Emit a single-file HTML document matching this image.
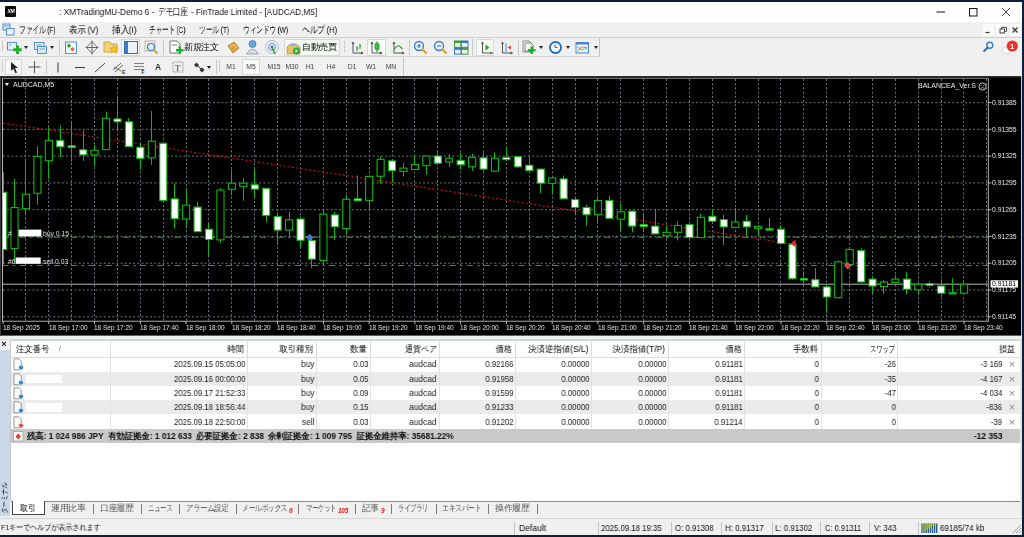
<!DOCTYPE html><html><head><meta charset="utf-8"><style>
html,body{margin:0;padding:0;width:1024px;height:537px;overflow:hidden;background:#f0f0f0}
.r{position:absolute}
.t{position:absolute;white-space:nowrap;font-family:"Liberation Sans", sans-serif;will-change:transform}
.j{display:inline-block;width:1em;text-align:center}
</style></head><body><div class="r" style="left:0px;top:0px;width:1024px;height:537px;background:#f0f0f0;"></div>
<div class="r" style="left:0px;top:0px;width:1024px;height:1.6px;background:#0e2038;"></div>
<div class="r" style="left:0px;top:1.6px;width:1022.4px;height:20.9px;background:#ffffff;"></div>
<div class="r" style="left:5px;top:6px;width:11px;height:11px;background:#0a0a0a;border-radius:1px"></div>
<div class="t" style="left:-89.50px;width:200px;text-align:center;top:8.20px;font-size:5px;line-height:6.00px;color:#fff;font-weight:bold;font-style:italic;letter-spacing:-0.3px">XM</div>
<div class="t" id="fit0" style="left:59.1px;top:6.30px;font-size:9.5px;line-height:11.40px;color:#111;font-weight:normal;;transform-origin:left center;transform:scaleX(0.8800)">: XMTradingMU-Demo 6 -</div>
<div class="t" id="fit1" style="left:157.8px;top:6.30px;font-size:9.5px;line-height:11.40px;color:#111;font-weight:normal;;transform-origin:left center;transform:scaleX(0.7711)"><span class="j">デ</span><span class="j">モ</span><span class="j">口</span><span class="j">座</span></div>
<div class="t" id="fit2" style="left:190.5px;top:6.30px;font-size:9.5px;line-height:11.40px;color:#111;font-weight:normal;;transform-origin:left center;transform:scaleX(0.8613)">- FinTrade Limited - [AUDCAD,M5]</div>
<svg class="r" style="left:930px;top:4px" width="92" height="16" viewBox="0 0 92 16"><line x1="6.5" y1="8" x2="15" y2="8" stroke="#111" stroke-width="1"/><rect x="39.5" y="4.5" width="7.5" height="7.5" fill="none" stroke="#111" stroke-width="1"/><line x1="72" y1="4" x2="80" y2="12" stroke="#333" stroke-width="0.9"/><line x1="80" y1="4" x2="72" y2="12" stroke="#333" stroke-width="0.9"/></svg>
<div class="r" style="left:0px;top:22.5px;width:1022px;height:14.5px;background:#f0f0f0;"></div>
<div class="r" style="left:0px;top:37px;width:1022px;height:1px;background:#cfcfcf;"></div>
<svg class="r" style="left:2px;top:23px" width="13" height="13" viewBox="0 0 13 13"><rect x="1" y="1" width="7" height="6" fill="#dbe8f5" stroke="#4a86c8" stroke-width="0.9"/><rect x="4.5" y="5.5" width="7.5" height="6.5" fill="#e8f1fa" stroke="#4a86c8" stroke-width="0.9"/><line x1="2" y1="3" x2="7" y2="3" stroke="#4a86c8" stroke-width="0.8"/></svg>
<div class="t" id="fit3" style="left:19.3px;top:24.10px;font-size:9.5px;line-height:11.40px;color:#000;font-weight:normal;;transform-origin:left center;transform:scaleX(0.6934)"><span class="j">フ</span><span class="j">ァ</span><span class="j">イ</span><span class="j">ル</span> (F)</div>
<div class="t" id="fit4" style="left:68.6px;top:24.10px;font-size:9.5px;line-height:11.40px;color:#000;font-weight:normal;;transform-origin:left center;transform:scaleX(0.8539)"><span class="j">表</span><span class="j">示</span> (V)</div>
<div class="t" id="fit5" style="left:111.5px;top:24.10px;font-size:9.5px;line-height:11.40px;color:#000;font-weight:normal;;transform-origin:left center;transform:scaleX(0.8796)"><span class="j">挿</span><span class="j">入</span>(I)</div>
<div class="t" id="fit6" style="left:149px;top:24.10px;font-size:9.5px;line-height:11.40px;color:#000;font-weight:normal;;transform-origin:left center;transform:scaleX(0.6762)"><span class="j">チ</span><span class="j">ャ</span><span class="j">ー</span><span class="j">ト</span> (C)</div>
<div class="t" id="fit7" style="left:199px;top:24.10px;font-size:9.5px;line-height:11.40px;color:#000;font-weight:normal;;transform-origin:left center;transform:scaleX(0.6955)"><span class="j">ツ</span><span class="j">ー</span><span class="j">ル</span> (T)</div>
<div class="t" id="fit8" style="left:242.8px;top:24.10px;font-size:9.5px;line-height:11.40px;color:#000;font-weight:normal;;transform-origin:left center;transform:scaleX(0.6892)"><span class="j">ウ</span><span class="j">ィ</span><span class="j">ン</span><span class="j">ド</span><span class="j">ウ</span> (W)</div>
<div class="t" id="fit9" style="left:301.6px;top:24.10px;font-size:9.5px;line-height:11.40px;color:#000;font-weight:normal;;transform-origin:left center;transform:scaleX(0.7896)"><span class="j">ヘ</span><span class="j">ル</span><span class="j">プ</span> (H)</div>
<div class="r" style="left:982.7px;top:24px;width:11.3px;height:12px;background:#fbfbfb;"></div>
<div class="r" style="left:996.2px;top:24px;width:11.3px;height:12px;background:#fbfbfb;"></div>
<div class="r" style="left:1009.7px;top:24px;width:11.3px;height:12px;background:#fbfbfb;"></div>
<svg class="r" style="left:982px;top:24px" width="40" height="12" viewBox="0 0 40 12"><line x1="3.5" y1="8.5" x2="7.5" y2="8.5" stroke="#333" stroke-width="1.2"/><rect x="18" y="5" width="4.5" height="4" fill="none" stroke="#333" stroke-width="0.9"/><path d="M19.5 5 V3.3 H24.5 V7.3 H22.5" fill="none" stroke="#333" stroke-width="0.9"/><path d="M30.5 3.5 L35.5 8.5 M35.5 3.5 L30.5 8.5" stroke="#333" stroke-width="1.3"/></svg>
<div class="r" style="left:0px;top:38px;width:1022px;height:19px;background:#f0f0f0;"></div>
<div class="r" style="left:0px;top:56.3px;width:599.6px;height:1px;background:#d4d4d4;"></div>
<div class="r" style="left:0px;top:58px;width:1022px;height:18px;background:#f0f0f0;"></div>
<div class="r" style="left:0px;top:75.7px;width:1022px;height:2px;background:#2e2e2e;"></div>
<div class="r" style="left:2px;top:41px;width:1px;height:1px;background:#a8a8a8;"></div>
<div class="r" style="left:2px;top:43px;width:1px;height:1px;background:#a8a8a8;"></div>
<div class="r" style="left:2px;top:45px;width:1px;height:1px;background:#a8a8a8;"></div>
<div class="r" style="left:2px;top:47px;width:1px;height:1px;background:#a8a8a8;"></div>
<div class="r" style="left:2px;top:49px;width:1px;height:1px;background:#a8a8a8;"></div>
<div class="r" style="left:2px;top:51px;width:1px;height:1px;background:#a8a8a8;"></div>
<div class="r" style="left:2px;top:60px;width:1px;height:1px;background:#a8a8a8;"></div>
<div class="r" style="left:2px;top:62px;width:1px;height:1px;background:#a8a8a8;"></div>
<div class="r" style="left:2px;top:64px;width:1px;height:1px;background:#a8a8a8;"></div>
<div class="r" style="left:2px;top:66px;width:1px;height:1px;background:#a8a8a8;"></div>
<div class="r" style="left:2px;top:68px;width:1px;height:1px;background:#a8a8a8;"></div>
<div class="r" style="left:2px;top:70px;width:1px;height:1px;background:#a8a8a8;"></div>
<div class="r" style="left:599.3px;top:38px;width:1px;height:18.5px;background:#c4c4c4;"></div>
<div class="r" style="left:402.5px;top:58px;width:1px;height:18px;background:#c4c4c4;"></div>
<div class="r" style="left:59px;top:40px;width:1px;height:15px;background:#c8c8c8;"></div>
<div class="r" style="left:163px;top:40px;width:1px;height:15px;background:#c8c8c8;"></div>
<div class="r" style="left:409px;top:40px;width:1px;height:15px;background:#c8c8c8;"></div>
<div class="r" style="left:518px;top:40px;width:1px;height:15px;background:#c8c8c8;"></div>
<div class="r" style="left:46px;top:60px;width:1px;height:14px;background:#c8c8c8;"></div>
<div class="r" style="left:216px;top:60px;width:1px;height:14px;background:#c8c8c8;"></div>
<div class="r" style="left:343.5px;top:41px;width:1px;height:1px;background:#a8a8a8;"></div>
<div class="r" style="left:343.5px;top:43px;width:1px;height:1px;background:#a8a8a8;"></div>
<div class="r" style="left:343.5px;top:45px;width:1px;height:1px;background:#a8a8a8;"></div>
<div class="r" style="left:343.5px;top:47px;width:1px;height:1px;background:#a8a8a8;"></div>
<div class="r" style="left:343.5px;top:49px;width:1px;height:1px;background:#a8a8a8;"></div>
<div class="r" style="left:343.5px;top:51px;width:1px;height:1px;background:#a8a8a8;"></div>
<div class="r" style="left:472.3px;top:39px;width:1.2px;height:17px;background:#c8c8c8;"></div>
<div class="r" style="left:219px;top:60px;width:1px;height:1px;background:#a8a8a8;"></div>
<div class="r" style="left:219px;top:62px;width:1px;height:1px;background:#a8a8a8;"></div>
<div class="r" style="left:219px;top:64px;width:1px;height:1px;background:#a8a8a8;"></div>
<div class="r" style="left:219px;top:66px;width:1px;height:1px;background:#a8a8a8;"></div>
<div class="r" style="left:219px;top:68px;width:1px;height:1px;background:#a8a8a8;"></div>
<div class="r" style="left:219px;top:70px;width:1px;height:1px;background:#a8a8a8;"></div>
<div class="r" style="left:121px;top:39px;width:19px;height:17px;background:#f7fbf5;border:1px solid #d8d8d8;box-sizing:border-box"></div>
<div class="r" style="left:284px;top:39px;width:56px;height:17px;background:#f7fbf5;border:1px solid #d8d8d8;box-sizing:border-box"></div>
<div class="r" style="left:367px;top:39px;width:19px;height:17px;background:#f7fbf5;border:1px solid #d8d8d8;box-sizing:border-box"></div>
<div class="r" style="left:476px;top:39px;width:18px;height:17px;background:#f7fbf5;border:1px solid #d8d8d8;box-sizing:border-box"></div>
<div class="r" style="left:5px;top:59px;width:17px;height:16px;background:#f7fbf5;border:1px solid #d8d8d8;box-sizing:border-box"></div>
<div class="r" style="left:242px;top:59px;width:18px;height:16px;background:#f7fbf5;border:1px solid #d8d8d8;box-sizing:border-box"></div>
<svg class="r" style="left:6px;top:40px" width="16" height="15" viewBox="0 0 16 15"><rect x="1.5" y="2.5" width="9" height="7.5" fill="#e6f0fa" stroke="#4a86c8" stroke-width="0.9"/><line x1="3" y1="5" x2="5" y2="5" stroke="#4a86c8" stroke-width="0.8"/><path d="M7.3 8.3 h2.7 v-2.7 h3 v2.7 h2.7 v3 h-2.7 v2.7 h-3 v-2.7 h-2.7z" fill="#22b422"/></svg>
<div class="r" style="left:24px;top:46px;width:0;height:0;border-left:2.5px solid transparent;border-right:2.5px solid transparent;border-top:3px solid #222"></div>
<svg class="r" style="left:33px;top:40px" width="15" height="15" viewBox="0 0 15 15"><rect x="1.5" y="2.5" width="9.5" height="7" fill="#e6f0fa" stroke="#4a86c8" stroke-width="0.9"/><rect x="4.5" y="6.5" width="9" height="7" fill="#dceaf8" stroke="#4a86c8" stroke-width="0.9"/><line x1="3" y1="5" x2="9" y2="5" stroke="#4a86c8" stroke-width="0.7"/><line x1="6" y1="9" x2="12" y2="9" stroke="#4a86c8" stroke-width="0.7"/></svg>
<div class="r" style="left:50px;top:46px;width:0;height:0;border-left:2.5px solid transparent;border-right:2.5px solid transparent;border-top:3px solid #222"></div>
<svg class="r" style="left:64px;top:40px" width="14" height="15" viewBox="0 0 14 15"><rect x="1.5" y="2" width="11" height="11.5" fill="#f4f8fc" stroke="#5b93d2" stroke-width="1"/><path d="M5 3.5 l2.2 2.2 l-2.2 2.2 l-2.2-2.2z" fill="#2aa52a"/><path d="M8.5 7 l2.2 2.2 l-2.2 2.2 l-2.2-2.2z" fill="#e0603a"/></svg>
<svg class="r" style="left:85px;top:40px" width="14" height="15" viewBox="0 0 14 15"><path d="M7 1.5 L12.5 7.5 L7 13.5 L1.5 7.5z" fill="none" stroke="#666" stroke-width="0.9"/><path d="M7 0.5 v14 M0.5 7.5 h13" stroke="#555" stroke-width="0.9"/></svg>
<svg class="r" style="left:103px;top:39px" width="17" height="16" viewBox="0 0 17 16"><path d="M1 3 h6 l1 2 h6 v8 h-13z" fill="#f2d37a" stroke="#c9a440"/><path d="M11 6 l1.3 2.7 3 .4-2.2 2 .6 3-2.7-1.5-2.7 1.5.6-3-2.2-2 3-.4z" fill="#f5c518" stroke="#c9a030" stroke-width="0.6"/></svg>
<svg class="r" style="left:124px;top:41px" width="14" height="13" viewBox="0 0 14 13"><rect x="0.5" y="0.5" width="13" height="12" fill="#eaf3fb" stroke="#2e6db4"/><rect x="1" y="1" width="3" height="11" fill="#3d7fc7"/></svg>
<svg class="r" style="left:144px;top:40px" width="15" height="15" viewBox="0 0 15 15"><rect x="1" y="1" width="10" height="10" fill="#f4efe0" stroke="#aaa" stroke-width="0.8"/><circle cx="7" cy="7" r="3.5" fill="#dfeefc" stroke="#3b78c0" stroke-width="1.2"/><path d="M9.5 9.5 l4 4" stroke="#d8a030" stroke-width="2"/></svg>
<svg class="r" style="left:168px;top:40px" width="16" height="16" viewBox="0 0 16 16"><path d="M2 1 h7 l3 3 v9 h-10z" fill="#fff" stroke="#666" stroke-width="0.9"/><line x1="4" y1="5" x2="9" y2="5" stroke="#888"/><path d="M8 9 h2.5 v-2.5 h2.5 v2.5 h2.5 v2.5 h-2.5 v2.5 h-2.5 v-2.5 h-2.5z" fill="#1fae2f"/></svg>
<div class="t" id="fit10" style="left:184px;top:42.40px;font-size:8.5px;line-height:10.20px;color:#000;font-weight:normal;;transform-origin:left center;transform:scaleX(1.0000)"><span class="j">新</span><span class="j">規</span><span class="j">注</span><span class="j">文</span></div>
<svg class="r" style="left:225px;top:40px" width="15" height="15" viewBox="0 0 15 15"><path d="M3 6 l6 -4 l5 6 l-6 5z" fill="#d9a63a" stroke="#a87820" stroke-width="0.8"/><path d="M5 7 l4 -2.5 l3 3.5" fill="none" stroke="#f5d98a"/></svg>
<svg class="r" style="left:245px;top:39px" width="15" height="16" viewBox="0 0 15 16"><circle cx="7.5" cy="5" r="3.5" fill="#6aa6e0" stroke="#3a76b8" stroke-width="0.8"/><path d="M1.5 15 q6 -10 12 0z" fill="#d8dde6" stroke="#8a96a8" stroke-width="0.8"/></svg>
<svg class="r" style="left:264px;top:39px" width="16" height="16" viewBox="0 0 16 16"><circle cx="8" cy="8" r="6.5" fill="#e4ecf6" stroke="#a8b8cc" stroke-width="0.8"/><circle cx="8" cy="8" r="3.5" fill="none" stroke="#6a8ab0" stroke-width="0.9"/><circle cx="8" cy="8" r="1.5" fill="#3a6aa0"/><path d="M8 8 l3 7" stroke="#2fa52f" stroke-width="1.6"/></svg>
<svg class="r" style="left:286px;top:40px" width="15" height="15" viewBox="0 0 15 15"><path d="M1 7 q6-7 13 0 v7 h-13z" fill="#e6c36a" stroke="#b8902a" stroke-width="0.7"/><path d="M2 6 q5-5 11 0" fill="#8ab8e6"/><circle cx="10.5" cy="11" r="3.6" fill="#2bae3b"/><path d="M9.5 9.2 l2.6 1.8 l-2.6 1.8z" fill="#fff"/></svg>
<div class="t" id="fit11" style="left:301.5px;top:42.40px;font-size:8.5px;line-height:10.20px;color:#000;font-weight:normal;;transform-origin:left center;transform:scaleX(0.9912)"><span class="j">自</span><span class="j">動</span><span class="j">売</span><span class="j">買</span></div>
<svg class="r" style="left:350px;top:40px" width="14" height="15" viewBox="0 0 14 15"><path d="M3 2 v11 h10" fill="none" stroke="#555" stroke-width="1"/><path d="M1.5 4 l1.5-2.5 l1.5 2.5z M11 11.5 l2.5 1.5 l-2.5 1.5z" fill="#555"/><path d="M7 6 v5 M10 4 v5 M7 8 h1.2 M10 6 h1.2" stroke="#2a9a2a" stroke-width="1.1"/></svg>
<svg class="r" style="left:369px;top:40px" width="15" height="15" viewBox="0 0 15 15"><path d="M3 2 v11 h10" fill="none" stroke="#555" stroke-width="1"/><path d="M1.5 4 l1.5-2.5 l1.5 2.5z M11 11.5 l2.5 1.5 l-2.5 1.5z" fill="#555"/><rect x="6" y="3" width="4" height="7" rx="2" fill="#3bbf3b" stroke="#1f8f1f" stroke-width="0.8"/><path d="M8 1.5 v1.5 M8 10 v2" stroke="#1f8f1f"/></svg>
<svg class="r" style="left:391px;top:40px" width="14" height="15" viewBox="0 0 14 15"><path d="M3 2 v11 h10" fill="none" stroke="#555" stroke-width="1"/><path d="M1.5 4 l1.5-2.5 l1.5 2.5z M11 11.5 l2.5 1.5 l-2.5 1.5z" fill="#555"/><path d="M3.5 9 q2.5-4 5-3 l3 3" fill="none" stroke="#2a9a2a" stroke-width="1.1"/></svg>
<svg class="r" style="left:413px;top:40px" width="15" height="15" viewBox="0 0 15 15"><circle cx="6" cy="6" r="4.5" fill="#e6f1fc" stroke="#3a7cc4" stroke-width="1.3"/><path d="M4 6 h4 M6 4 v4" stroke="#3a7cc4" stroke-width="1.2"/><path d="M9 9 l4.5 4.5" stroke="#d8a030" stroke-width="2.2"/></svg>
<svg class="r" style="left:433px;top:40px" width="15" height="15" viewBox="0 0 15 15"><circle cx="6" cy="6" r="4.5" fill="#e6f1fc" stroke="#3a7cc4" stroke-width="1.3"/><path d="M4 6 h4" stroke="#3a7cc4" stroke-width="1.2"/><path d="M9 9 l4.5 4.5" stroke="#d8a030" stroke-width="2.2"/></svg>
<svg class="r" style="left:454px;top:40px" width="15" height="15" viewBox="0 0 15 15"><rect x="0.5" y="1" width="6.5" height="6.3" fill="#eef6ee" stroke="#3a9a3a"/><rect x="0.5" y="1" width="6.5" height="2" fill="#3a9a3a"/><rect x="7.5" y="1" width="6.5" height="6.3" fill="#eef3fb" stroke="#3a78c8"/><rect x="7.5" y="1" width="6.5" height="2" fill="#3a78c8"/><rect x="0.5" y="7.8" width="6.5" height="6.3" fill="#eef3fb" stroke="#3a78c8"/><rect x="0.5" y="7.8" width="6.5" height="2" fill="#3a78c8"/><rect x="7.5" y="7.8" width="6.5" height="6.3" fill="#eef6ee" stroke="#3a9a3a"/><rect x="7.5" y="7.8" width="6.5" height="2" fill="#3a9a3a"/></svg>
<svg class="r" style="left:479px;top:40px" width="15" height="15" viewBox="0 0 15 15"><path d="M3.5 2 v11 h10" fill="none" stroke="#555" stroke-width="1"/><path d="M2 4 l1.5-2.5 l1.5 2.5z M11.5 11.5 l2.5 1.5 l-2.5 1.5z" fill="#555"/><path d="M6.5 4.5 l4 3 l-4 3z" fill="#2aa52a"/></svg>
<svg class="r" style="left:499px;top:40px" width="15" height="15" viewBox="0 0 15 15"><path d="M3.5 2 v11 h10" fill="none" stroke="#555" stroke-width="1"/><path d="M2 4 l1.5-2.5 l1.5 2.5z M11.5 11.5 l2.5 1.5 l-2.5 1.5z" fill="#555"/><path d="M7 3 v9" stroke="#4a8ad0" stroke-width="1"/><path d="M12 5.5 l-3.5 2 l3.5 2z" fill="#d84a2a"/></svg>
<svg class="r" style="left:521px;top:40px" width="16" height="16" viewBox="0 0 16 16"><path d="M2 1 h6 l2 2 v9 h-8z" fill="#fff" stroke="#666" stroke-width="0.8"/><path d="M4 3 h6 l2 2 v6 h-8z" fill="#f6f6f6" stroke="#666" stroke-width="0.8"/><path d="M7 9 h2.5 v-2.5 h2.5 v2.5 h2.5 v2.5 h-2.5 v2.5 h-2.5 v-2.5 h-2.5z" fill="#1fae2f"/></svg>
<div class="r" style="left:539px;top:46px;width:0;height:0;border-left:2.5px solid transparent;border-right:2.5px solid transparent;border-top:3px solid #222"></div>
<svg class="r" style="left:548px;top:40px" width="16" height="16" viewBox="0 0 16 16"><circle cx="7.5" cy="7.5" r="6.5" fill="#1f6fc0"/><circle cx="7.5" cy="7.5" r="4.6" fill="#f4f8fc"/><path d="M7 4.5 v3 h2.5" stroke="#444" stroke-width="0.8" fill="none"/></svg>
<div class="r" style="left:566px;top:46px;width:0;height:0;border-left:2.5px solid transparent;border-right:2.5px solid transparent;border-top:3px solid #222"></div>
<svg class="r" style="left:575px;top:41px" width="15" height="14" viewBox="0 0 15 14"><rect x="1" y="1.5" width="12.5" height="10.5" fill="#eef4fb" stroke="#4a86c8"/><rect x="1" y="1.5" width="12.5" height="2" fill="#4a86c8"/><path d="M2.5 10 l2.5-2 l2.5 1 l2.5-2.5 l2.5 2" stroke="#2aa52a" fill="none" stroke-width="0.8"/><path d="M2.5 6.5 l2.5 .8 l2.5-1.5 l2.5 .8 l2.5-.8" stroke="#d84a2a" fill="none" stroke-width="0.7"/></svg>
<div class="r" style="left:594px;top:46px;width:0;height:0;border-left:2.5px solid transparent;border-right:2.5px solid transparent;border-top:3px solid #222"></div>
<svg class="r" style="left:980px;top:39px" width="16" height="16" viewBox="0 0 16 16"><circle cx="9.8" cy="6.3" r="3" fill="#f4f8fc" stroke="#3a7cc4" stroke-width="1.4"/><path d="M7.7 8.5 l-3.6 3.6" stroke="#2a6cb4" stroke-width="2" stroke-linecap="round"/></svg>
<svg class="r" style="left:1000px;top:38px" width="22" height="18" viewBox="0 0 22 18"><ellipse cx="6.5" cy="12.5" rx="4.5" ry="3.2" fill="#f8f8f8" stroke="#c8c8c8" stroke-width="0.7"/><circle cx="12.3" cy="8" r="5.6" fill="#e5332a"/></svg>
<div class="t" style="left:912.40px;width:200px;text-align:center;top:41.80px;font-size:7.5px;line-height:9.00px;color:#fff;font-weight:bold;">1</div>
<svg class="r" style="left:8px;top:60px" width="12" height="14" viewBox="0 0 12 14"><path d="M3 2 l7 6 h-3 l2 4.5 l-1.6 .8 l-2-4.5 l-2.4 2.2z" fill="#222"/></svg>
<svg class="r" style="left:28px;top:60px" width="13" height="14" viewBox="0 0 13 14"><path d="M6.5 1 v12 M0.5 7 h12" stroke="#555" stroke-width="1"/></svg>
<svg class="r" style="left:55px;top:60px" width="6" height="14" viewBox="0 0 6 14"><path d="M3 2.5 v10" stroke="#444" stroke-width="1.1"/></svg>
<svg class="r" style="left:73px;top:60px" width="14" height="14" viewBox="0 0 14 14"><path d="M2 7.5 h10" stroke="#444" stroke-width="1.1"/></svg>
<svg class="r" style="left:93px;top:60px" width="14" height="14" viewBox="0 0 14 14"><path d="M2 12 l10 -9" stroke="#444" stroke-width="1"/></svg>
<svg class="r" style="left:112px;top:60px" width="15" height="14" viewBox="0 0 15 14"><path d="M1 10 l8-7 M3 12 l8-7 M2 7 l7 4" stroke="#555" stroke-width="0.9"/><text x="10" y="13.5" font-size="5" font-weight="bold" font-family="Liberation Sans" fill="#333">E</text></svg>
<svg class="r" style="left:132px;top:60px" width="15" height="14" viewBox="0 0 15 14"><path d="M2 3.5 h10 M2 6.5 h10 M2 9.5 h10" stroke="#666" stroke-width="0.8"/><text x="9.5" y="13.5" font-size="5" font-weight="bold" font-family="Liberation Sans" fill="#333">F</text></svg>
<div class="t" style="left:58.00px;width:200px;text-align:center;top:61.90px;font-size:8.5px;line-height:10.20px;color:#333;font-weight:bold;">A</div>
<svg class="r" style="left:172px;top:60px" width="12" height="14" viewBox="0 0 12 14"><rect x="1" y="2" width="10" height="10" fill="none" stroke="#777" stroke-width="0.8" stroke-dasharray="1.5 1"/><text x="3" y="11" font-size="9" font-family="Liberation Serif" fill="#333">T</text></svg>
<svg class="r" style="left:193px;top:60px" width="13" height="14" viewBox="0 0 13 14"><path d="M3.5 2.5 l2.5 2.5 l-2.5 2.5 l-2.5-2.5z" fill="#333"/><path d="M9 7.5 l2.5 2.5 l-2.5 2.5 l-2.5-2.5z" fill="#333"/><path d="M5 6 l3 3" stroke="#333" stroke-width="1"/></svg>
<div class="r" style="left:207px;top:66px;width:0;height:0;border-left:2.5px solid transparent;border-right:2.5px solid transparent;border-top:3px solid #222"></div>
<div class="t" style="left:130.50px;width:200px;text-align:center;top:63.22px;font-size:6.8px;line-height:8.16px;color:#444;font-weight:normal;">M1</div>
<div class="t" style="left:151.00px;width:200px;text-align:center;top:63.22px;font-size:6.8px;line-height:8.16px;color:#444;font-weight:normal;">M5</div>
<div class="t" style="left:173.50px;width:200px;text-align:center;top:63.22px;font-size:6.8px;line-height:8.16px;color:#444;font-weight:normal;">M15</div>
<div class="t" style="left:191.50px;width:200px;text-align:center;top:63.22px;font-size:6.8px;line-height:8.16px;color:#444;font-weight:normal;">M30</div>
<div class="t" style="left:210.00px;width:200px;text-align:center;top:63.22px;font-size:6.8px;line-height:8.16px;color:#444;font-weight:normal;">H1</div>
<div class="t" style="left:230.50px;width:200px;text-align:center;top:63.22px;font-size:6.8px;line-height:8.16px;color:#444;font-weight:normal;">H4</div>
<div class="t" style="left:252.00px;width:200px;text-align:center;top:63.22px;font-size:6.8px;line-height:8.16px;color:#444;font-weight:normal;">D1</div>
<div class="t" style="left:271.00px;width:200px;text-align:center;top:63.22px;font-size:6.8px;line-height:8.16px;color:#444;font-weight:normal;">W1</div>
<div class="t" style="left:291.00px;width:200px;text-align:center;top:63.22px;font-size:6.8px;line-height:8.16px;color:#444;font-weight:normal;">MN</div>
<svg class="r" style="left:0px;top:0px" width="1024" height="537" viewBox="0 0 1024 537">
<rect x="0" y="77.5" width="1021" height="258.1" fill="#000"/><line x1="3" y1="102.60" x2="988.3" y2="102.60" stroke="#6c7680" stroke-width="1" stroke-dasharray="2 2.2"/><line x1="3" y1="129.37" x2="988.3" y2="129.37" stroke="#6c7680" stroke-width="1" stroke-dasharray="2 2.2"/><line x1="3" y1="156.14" x2="988.3" y2="156.14" stroke="#6c7680" stroke-width="1" stroke-dasharray="2 2.2"/><line x1="3" y1="182.91" x2="988.3" y2="182.91" stroke="#6c7680" stroke-width="1" stroke-dasharray="2 2.2"/><line x1="3" y1="209.68" x2="988.3" y2="209.68" stroke="#6c7680" stroke-width="1" stroke-dasharray="2 2.2"/><line x1="3" y1="236.45" x2="988.3" y2="236.45" stroke="#6c7680" stroke-width="1" stroke-dasharray="2 2.2"/><line x1="3" y1="263.22" x2="988.3" y2="263.22" stroke="#6c7680" stroke-width="1" stroke-dasharray="2 2.2"/><line x1="3" y1="289.99" x2="988.3" y2="289.99" stroke="#6c7680" stroke-width="1" stroke-dasharray="2 2.2"/><line x1="3" y1="316.76" x2="988.3" y2="316.76" stroke="#6c7680" stroke-width="1" stroke-dasharray="2 2.2"/><line x1="25.50" y1="79" x2="25.50" y2="321.2" stroke="#6c7680" stroke-width="1" stroke-dasharray="2 2.2"/><line x1="48.50" y1="79" x2="48.50" y2="321.2" stroke="#6c7680" stroke-width="1" stroke-dasharray="2 2.2"/><line x1="71.50" y1="79" x2="71.50" y2="321.2" stroke="#6c7680" stroke-width="1" stroke-dasharray="2 2.2"/><line x1="94.50" y1="79" x2="94.50" y2="321.2" stroke="#6c7680" stroke-width="1" stroke-dasharray="2 2.2"/><line x1="117.50" y1="79" x2="117.50" y2="321.2" stroke="#6c7680" stroke-width="1" stroke-dasharray="2 2.2"/><line x1="140.50" y1="79" x2="140.50" y2="321.2" stroke="#6c7680" stroke-width="1" stroke-dasharray="2 2.2"/><line x1="163.50" y1="79" x2="163.50" y2="321.2" stroke="#6c7680" stroke-width="1" stroke-dasharray="2 2.2"/><line x1="186.50" y1="79" x2="186.50" y2="321.2" stroke="#6c7680" stroke-width="1" stroke-dasharray="2 2.2"/><line x1="208.50" y1="79" x2="208.50" y2="321.2" stroke="#6c7680" stroke-width="1" stroke-dasharray="2 2.2"/><line x1="231.50" y1="79" x2="231.50" y2="321.2" stroke="#6c7680" stroke-width="1" stroke-dasharray="2 2.2"/><line x1="254.50" y1="79" x2="254.50" y2="321.2" stroke="#6c7680" stroke-width="1" stroke-dasharray="2 2.2"/><line x1="277.50" y1="79" x2="277.50" y2="321.2" stroke="#6c7680" stroke-width="1" stroke-dasharray="2 2.2"/><line x1="300.50" y1="79" x2="300.50" y2="321.2" stroke="#6c7680" stroke-width="1" stroke-dasharray="2 2.2"/><line x1="323.50" y1="79" x2="323.50" y2="321.2" stroke="#6c7680" stroke-width="1" stroke-dasharray="2 2.2"/><line x1="346.50" y1="79" x2="346.50" y2="321.2" stroke="#6c7680" stroke-width="1" stroke-dasharray="2 2.2"/><line x1="369.50" y1="79" x2="369.50" y2="321.2" stroke="#6c7680" stroke-width="1" stroke-dasharray="2 2.2"/><line x1="392.50" y1="79" x2="392.50" y2="321.2" stroke="#6c7680" stroke-width="1" stroke-dasharray="2 2.2"/><line x1="414.50" y1="79" x2="414.50" y2="321.2" stroke="#6c7680" stroke-width="1" stroke-dasharray="2 2.2"/><line x1="437.50" y1="79" x2="437.50" y2="321.2" stroke="#6c7680" stroke-width="1" stroke-dasharray="2 2.2"/><line x1="460.50" y1="79" x2="460.50" y2="321.2" stroke="#6c7680" stroke-width="1" stroke-dasharray="2 2.2"/><line x1="483.50" y1="79" x2="483.50" y2="321.2" stroke="#6c7680" stroke-width="1" stroke-dasharray="2 2.2"/><line x1="506.50" y1="79" x2="506.50" y2="321.2" stroke="#6c7680" stroke-width="1" stroke-dasharray="2 2.2"/><line x1="529.50" y1="79" x2="529.50" y2="321.2" stroke="#6c7680" stroke-width="1" stroke-dasharray="2 2.2"/><line x1="552.50" y1="79" x2="552.50" y2="321.2" stroke="#6c7680" stroke-width="1" stroke-dasharray="2 2.2"/><line x1="575.50" y1="79" x2="575.50" y2="321.2" stroke="#6c7680" stroke-width="1" stroke-dasharray="2 2.2"/><line x1="597.50" y1="79" x2="597.50" y2="321.2" stroke="#6c7680" stroke-width="1" stroke-dasharray="2 2.2"/><line x1="620.50" y1="79" x2="620.50" y2="321.2" stroke="#6c7680" stroke-width="1" stroke-dasharray="2 2.2"/><line x1="643.50" y1="79" x2="643.50" y2="321.2" stroke="#6c7680" stroke-width="1" stroke-dasharray="2 2.2"/><line x1="666.50" y1="79" x2="666.50" y2="321.2" stroke="#6c7680" stroke-width="1" stroke-dasharray="2 2.2"/><line x1="689.50" y1="79" x2="689.50" y2="321.2" stroke="#6c7680" stroke-width="1" stroke-dasharray="2 2.2"/><line x1="712.50" y1="79" x2="712.50" y2="321.2" stroke="#6c7680" stroke-width="1" stroke-dasharray="2 2.2"/><line x1="735.50" y1="79" x2="735.50" y2="321.2" stroke="#6c7680" stroke-width="1" stroke-dasharray="2 2.2"/><line x1="758.50" y1="79" x2="758.50" y2="321.2" stroke="#6c7680" stroke-width="1" stroke-dasharray="2 2.2"/><line x1="780.50" y1="79" x2="780.50" y2="321.2" stroke="#6c7680" stroke-width="1" stroke-dasharray="2 2.2"/><line x1="803.50" y1="79" x2="803.50" y2="321.2" stroke="#6c7680" stroke-width="1" stroke-dasharray="2 2.2"/><line x1="826.50" y1="79" x2="826.50" y2="321.2" stroke="#6c7680" stroke-width="1" stroke-dasharray="2 2.2"/><line x1="849.50" y1="79" x2="849.50" y2="321.2" stroke="#6c7680" stroke-width="1" stroke-dasharray="2 2.2"/><line x1="872.50" y1="79" x2="872.50" y2="321.2" stroke="#6c7680" stroke-width="1" stroke-dasharray="2 2.2"/><line x1="895.50" y1="79" x2="895.50" y2="321.2" stroke="#6c7680" stroke-width="1" stroke-dasharray="2 2.2"/><line x1="918.50" y1="79" x2="918.50" y2="321.2" stroke="#6c7680" stroke-width="1" stroke-dasharray="2 2.2"/><line x1="941.50" y1="79" x2="941.50" y2="321.2" stroke="#6c7680" stroke-width="1" stroke-dasharray="2 2.2"/><line x1="963.50" y1="79" x2="963.50" y2="321.2" stroke="#6c7680" stroke-width="1" stroke-dasharray="2 2.2"/><line x1="986.50" y1="79" x2="986.50" y2="321.2" stroke="#6c7680" stroke-width="1" stroke-dasharray="2 2.2"/><rect x="2.5" y="78.5" width="985.8" height="242.7" fill="none" stroke="#c0c0c0" stroke-width="0.9"/><line x1="2.5" y1="78.3" x2="988.3" y2="78.3" stroke="#606060" stroke-width="1"/><line x1="3" y1="284.2" x2="988.3" y2="284.2" stroke="#b8b8b8" stroke-width="1"/><line x1="3" y1="237.3" x2="988.3" y2="237.3" stroke="#1ea81e" stroke-width="1.1" stroke-dasharray="6.2 4.2 2.5 4.3" stroke-dashoffset="0.6"/><line x1="3" y1="265.5" x2="988.3" y2="265.5" stroke="#1ea81e" stroke-width="1.1" stroke-dasharray="6.2 4.2 2.5 4.3" stroke-dashoffset="0.6"/><line x1="3" y1="123" x2="792" y2="244" stroke="#d01010" stroke-width="1.1" stroke-dasharray="2 2.3"/><line x1="3.50" y1="172.3" x2="3.50" y2="264.5" stroke="#0cb80c" stroke-width="1"/><rect x="-0.46" y="192.2" width="7.1" height="57.3" fill="#fff" stroke="#0cb80c" stroke-width="1.1"/><line x1="14.50" y1="178.9" x2="14.50" y2="262.0" stroke="#0cb80c" stroke-width="1"/><rect x="10.98" y="207.5" width="7.1" height="41.0" fill="#000" stroke="#0cb80c" stroke-width="1.1"/><line x1="25.50" y1="160.7" x2="25.50" y2="213.7" stroke="#0cb80c" stroke-width="1"/><rect x="22.42" y="194.2" width="7.1" height="14.4" fill="#000" stroke="#0cb80c" stroke-width="1.1"/><line x1="37.50" y1="146.3" x2="37.50" y2="204.7" stroke="#0cb80c" stroke-width="1"/><rect x="33.86" y="156.4" width="7.1" height="36.8" fill="#000" stroke="#0cb80c" stroke-width="1.1"/><line x1="48.50" y1="127.1" x2="48.50" y2="178.9" stroke="#0cb80c" stroke-width="1"/><rect x="45.30" y="140.4" width="7.1" height="20.3" fill="#000" stroke="#0cb80c" stroke-width="1.1"/><line x1="60.50" y1="125.7" x2="60.50" y2="157.4" stroke="#0cb80c" stroke-width="1"/><rect x="56.74" y="140.4" width="7.1" height="6.3" fill="#fff" stroke="#0cb80c" stroke-width="1.1"/><line x1="71.50" y1="121.8" x2="71.50" y2="161.9" stroke="#0cb80c" stroke-width="1"/><rect x="68.18" y="145.9" width="7.1" height="1.7" fill="#fff" stroke="#0cb80c" stroke-width="1.1"/><line x1="83.50" y1="130.6" x2="83.50" y2="160.9" stroke="#0cb80c" stroke-width="1"/><rect x="79.62" y="149.8" width="7.1" height="5.1" fill="#fff" stroke="#0cb80c" stroke-width="1.1"/><line x1="94.50" y1="144.7" x2="94.50" y2="166.2" stroke="#0cb80c" stroke-width="1"/><rect x="91.06" y="150.2" width="7.1" height="4.7" fill="#000" stroke="#0cb80c" stroke-width="1.1"/><line x1="106.50" y1="111.5" x2="106.50" y2="149.6" stroke="#0cb80c" stroke-width="1"/><rect x="102.50" y="118.3" width="7.1" height="31.3" fill="#000" stroke="#0cb80c" stroke-width="1.1"/><line x1="117.50" y1="95.8" x2="117.50" y2="130.0" stroke="#0cb80c" stroke-width="1"/><rect x="113.94" y="118.9" width="7.1" height="2.9" fill="#fff" stroke="#0cb80c" stroke-width="1.1"/><line x1="128.50" y1="118.3" x2="128.50" y2="146.7" stroke="#0cb80c" stroke-width="1"/><rect x="125.38" y="121.8" width="7.1" height="24.9" fill="#fff" stroke="#0cb80c" stroke-width="1.1"/><line x1="140.50" y1="142.7" x2="140.50" y2="170.1" stroke="#0cb80c" stroke-width="1"/><rect x="136.82" y="147.2" width="7.1" height="11.2" fill="#fff" stroke="#0cb80c" stroke-width="1.1"/><line x1="151.50" y1="111.1" x2="151.50" y2="164.8" stroke="#0cb80c" stroke-width="1"/><rect x="148.26" y="141.2" width="7.1" height="16.6" fill="#000" stroke="#0cb80c" stroke-width="1.1"/><line x1="163.50" y1="143.3" x2="163.50" y2="200.4" stroke="#0cb80c" stroke-width="1"/><rect x="159.70" y="143.3" width="7.1" height="57.1" fill="#fff" stroke="#0cb80c" stroke-width="1.1"/><line x1="174.50" y1="183.2" x2="174.50" y2="228.6" stroke="#0cb80c" stroke-width="1"/><rect x="171.14" y="198.9" width="7.1" height="19.9" fill="#fff" stroke="#0cb80c" stroke-width="1.1"/><line x1="186.50" y1="189.7" x2="186.50" y2="226.2" stroke="#0cb80c" stroke-width="1"/><rect x="182.58" y="205.1" width="7.1" height="13.9" fill="#000" stroke="#0cb80c" stroke-width="1.1"/><line x1="197.50" y1="201.8" x2="197.50" y2="232.0" stroke="#0cb80c" stroke-width="1"/><rect x="194.02" y="207.1" width="7.1" height="24.6" fill="#fff" stroke="#0cb80c" stroke-width="1.1"/><line x1="208.50" y1="223.3" x2="208.50" y2="255.6" stroke="#0cb80c" stroke-width="1"/><rect x="205.46" y="229.2" width="7.1" height="10.3" fill="#fff" stroke="#0cb80c" stroke-width="1.1"/><line x1="220.50" y1="188.1" x2="220.50" y2="242.9" stroke="#0cb80c" stroke-width="1"/><rect x="216.90" y="190.1" width="7.1" height="49.8" fill="#000" stroke="#0cb80c" stroke-width="1.1"/><line x1="231.50" y1="169.7" x2="231.50" y2="195.0" stroke="#0cb80c" stroke-width="1"/><rect x="228.34" y="183.2" width="7.1" height="6.1" fill="#000" stroke="#0cb80c" stroke-width="1.1"/><line x1="243.50" y1="178.3" x2="243.50" y2="200.8" stroke="#0cb80c" stroke-width="1"/><rect x="239.78" y="183.2" width="7.1" height="3.1" fill="#000" stroke="#0cb80c" stroke-width="1.1"/><line x1="254.50" y1="168.7" x2="254.50" y2="196.9" stroke="#0cb80c" stroke-width="1"/><rect x="251.22" y="184.8" width="7.1" height="4.3" fill="#fff" stroke="#0cb80c" stroke-width="1.1"/><line x1="266.50" y1="188.3" x2="266.50" y2="222.3" stroke="#0cb80c" stroke-width="1"/><rect x="262.66" y="188.3" width="7.1" height="27.2" fill="#fff" stroke="#0cb80c" stroke-width="1.1"/><line x1="277.50" y1="212.6" x2="277.50" y2="242.9" stroke="#0cb80c" stroke-width="1"/><rect x="274.10" y="216.5" width="7.1" height="13.6" fill="#fff" stroke="#0cb80c" stroke-width="1.1"/><line x1="289.50" y1="212.0" x2="289.50" y2="237.6" stroke="#0cb80c" stroke-width="1"/><rect x="285.54" y="219.8" width="7.1" height="10.3" fill="#000" stroke="#0cb80c" stroke-width="1.1"/><line x1="300.50" y1="216.5" x2="300.50" y2="247.3" stroke="#0cb80c" stroke-width="1"/><rect x="296.98" y="219.0" width="7.1" height="21.3" fill="#fff" stroke="#0cb80c" stroke-width="1.1"/><line x1="311.50" y1="237.0" x2="311.50" y2="268.3" stroke="#0cb80c" stroke-width="1"/><rect x="308.42" y="240.5" width="7.1" height="18.6" fill="#fff" stroke="#0cb80c" stroke-width="1.1"/><line x1="323.50" y1="208.6" x2="323.50" y2="265.3" stroke="#0cb80c" stroke-width="1"/><rect x="319.86" y="214.1" width="7.1" height="46.3" fill="#000" stroke="#0cb80c" stroke-width="1.1"/><line x1="334.50" y1="211.6" x2="334.50" y2="239.9" stroke="#0cb80c" stroke-width="1"/><rect x="331.30" y="214.9" width="7.1" height="11.9" fill="#fff" stroke="#0cb80c" stroke-width="1.1"/><line x1="346.50" y1="195.0" x2="346.50" y2="234.1" stroke="#0cb80c" stroke-width="1"/><rect x="342.74" y="199.3" width="7.1" height="29.3" fill="#000" stroke="#0cb80c" stroke-width="1.1"/><line x1="357.50" y1="175.4" x2="357.50" y2="201.2" stroke="#0cb80c" stroke-width="1"/><rect x="354.18" y="198.9" width="7.1" height="1.9" fill="#fff" stroke="#0cb80c" stroke-width="1.1"/><line x1="369.50" y1="175.8" x2="369.50" y2="210.2" stroke="#0cb80c" stroke-width="1"/><rect x="365.62" y="176.4" width="7.1" height="24.0" fill="#000" stroke="#0cb80c" stroke-width="1.1"/><line x1="380.50" y1="156.4" x2="380.50" y2="183.8" stroke="#0cb80c" stroke-width="1"/><rect x="377.06" y="159.3" width="7.1" height="17.0" fill="#000" stroke="#0cb80c" stroke-width="1.1"/><line x1="392.50" y1="160.3" x2="392.50" y2="182.8" stroke="#0cb80c" stroke-width="1"/><rect x="388.50" y="160.9" width="7.1" height="9.8" fill="#fff" stroke="#0cb80c" stroke-width="1.1"/><line x1="403.50" y1="163.2" x2="403.50" y2="176.5" stroke="#0cb80c" stroke-width="1"/><rect x="399.94" y="168.1" width="7.1" height="3.3" fill="#000" stroke="#0cb80c" stroke-width="1.1"/><line x1="414.50" y1="156.4" x2="414.50" y2="170.1" stroke="#0cb80c" stroke-width="1"/><rect x="411.38" y="164.6" width="7.1" height="4.9" fill="#000" stroke="#0cb80c" stroke-width="1.1"/><line x1="426.50" y1="156.0" x2="426.50" y2="174.6" stroke="#0cb80c" stroke-width="1"/><rect x="422.82" y="156.0" width="7.1" height="9.6" fill="#000" stroke="#0cb80c" stroke-width="1.1"/><line x1="437.50" y1="152.5" x2="437.50" y2="164.2" stroke="#0cb80c" stroke-width="1"/><rect x="434.26" y="156.0" width="7.1" height="7.2" fill="#fff" stroke="#0cb80c" stroke-width="1.1"/><line x1="449.50" y1="154.4" x2="449.50" y2="167.1" stroke="#0cb80c" stroke-width="1"/><rect x="445.70" y="158.3" width="7.1" height="3.6" fill="#000" stroke="#0cb80c" stroke-width="1.1"/><line x1="460.50" y1="152.5" x2="460.50" y2="169.1" stroke="#0cb80c" stroke-width="1"/><rect x="457.14" y="160.3" width="7.1" height="4.5" fill="#fff" stroke="#0cb80c" stroke-width="1.1"/><line x1="472.50" y1="154.0" x2="472.50" y2="170.7" stroke="#0cb80c" stroke-width="1"/><rect x="468.58" y="157.4" width="7.1" height="9.4" fill="#000" stroke="#0cb80c" stroke-width="1.1"/><line x1="483.50" y1="152.1" x2="483.50" y2="171.4" stroke="#0cb80c" stroke-width="1"/><rect x="480.02" y="157.8" width="7.1" height="11.3" fill="#fff" stroke="#0cb80c" stroke-width="1.1"/><line x1="494.50" y1="152.5" x2="494.50" y2="172.0" stroke="#0cb80c" stroke-width="1"/><rect x="491.46" y="158.3" width="7.1" height="12.8" fill="#000" stroke="#0cb80c" stroke-width="1.1"/><line x1="506.50" y1="148.2" x2="506.50" y2="161.3" stroke="#0cb80c" stroke-width="1"/><rect x="502.90" y="157.4" width="7.1" height="2.3" fill="#fff" stroke="#0cb80c" stroke-width="1.1"/><line x1="517.50" y1="156.0" x2="517.50" y2="168.1" stroke="#0cb80c" stroke-width="1"/><rect x="514.34" y="156.6" width="7.1" height="10.2" fill="#fff" stroke="#0cb80c" stroke-width="1.1"/><line x1="529.50" y1="156.0" x2="529.50" y2="170.5" stroke="#0cb80c" stroke-width="1"/><rect x="525.78" y="165.2" width="7.1" height="5.3" fill="#fff" stroke="#0cb80c" stroke-width="1.1"/><line x1="540.50" y1="168.5" x2="540.50" y2="193.5" stroke="#0cb80c" stroke-width="1"/><rect x="537.22" y="169.1" width="7.1" height="14.1" fill="#fff" stroke="#0cb80c" stroke-width="1.1"/><line x1="552.50" y1="176.9" x2="552.50" y2="194.5" stroke="#0cb80c" stroke-width="1"/><rect x="548.66" y="177.9" width="7.1" height="5.5" fill="#000" stroke="#0cb80c" stroke-width="1.1"/><line x1="563.50" y1="175.4" x2="563.50" y2="198.8" stroke="#0cb80c" stroke-width="1"/><rect x="560.10" y="178.9" width="7.1" height="19.9" fill="#fff" stroke="#0cb80c" stroke-width="1.1"/><line x1="575.50" y1="197.2" x2="575.50" y2="214.2" stroke="#0cb80c" stroke-width="1"/><rect x="571.54" y="199.6" width="7.1" height="7.9" fill="#fff" stroke="#0cb80c" stroke-width="1.1"/><line x1="586.50" y1="204.6" x2="586.50" y2="225.9" stroke="#0cb80c" stroke-width="1"/><rect x="582.98" y="207.5" width="7.1" height="7.2" fill="#fff" stroke="#0cb80c" stroke-width="1.1"/><line x1="597.50" y1="195.8" x2="597.50" y2="221.6" stroke="#0cb80c" stroke-width="1"/><rect x="594.42" y="200.5" width="7.1" height="14.2" fill="#000" stroke="#0cb80c" stroke-width="1.1"/><line x1="609.50" y1="195.8" x2="609.50" y2="218.7" stroke="#0cb80c" stroke-width="1"/><rect x="605.86" y="200.5" width="7.1" height="17.8" fill="#fff" stroke="#0cb80c" stroke-width="1.1"/><line x1="620.50" y1="203.4" x2="620.50" y2="230.4" stroke="#0cb80c" stroke-width="1"/><rect x="617.30" y="211.8" width="7.1" height="7.4" fill="#000" stroke="#0cb80c" stroke-width="1.1"/><line x1="632.50" y1="210.4" x2="632.50" y2="232.3" stroke="#0cb80c" stroke-width="1"/><rect x="628.74" y="211.2" width="7.1" height="14.9" fill="#fff" stroke="#0cb80c" stroke-width="1.1"/><line x1="643.50" y1="212.8" x2="643.50" y2="230.4" stroke="#0cb80c" stroke-width="1"/><rect x="640.18" y="224.5" width="7.1" height="2.0" fill="#fff" stroke="#0cb80c" stroke-width="1.1"/><line x1="655.50" y1="208.9" x2="655.50" y2="233.9" stroke="#0cb80c" stroke-width="1"/><rect x="651.62" y="226.1" width="7.1" height="7.8" fill="#fff" stroke="#0cb80c" stroke-width="1.1"/><line x1="666.50" y1="225.5" x2="666.50" y2="237.6" stroke="#0cb80c" stroke-width="1"/><rect x="663.06" y="232.3" width="7.1" height="3.4" fill="#000" stroke="#0cb80c" stroke-width="1.1"/><line x1="677.50" y1="221.6" x2="677.50" y2="240.5" stroke="#0cb80c" stroke-width="1"/><rect x="674.50" y="225.5" width="7.1" height="6.8" fill="#000" stroke="#0cb80c" stroke-width="1.1"/><line x1="689.50" y1="223.5" x2="689.50" y2="239.2" stroke="#0cb80c" stroke-width="1"/><rect x="685.94" y="224.5" width="7.1" height="13.1" fill="#fff" stroke="#0cb80c" stroke-width="1.1"/><line x1="700.50" y1="213.8" x2="700.50" y2="237.6" stroke="#0cb80c" stroke-width="1"/><rect x="697.38" y="217.3" width="7.1" height="20.3" fill="#000" stroke="#0cb80c" stroke-width="1.1"/><line x1="712.50" y1="208.9" x2="712.50" y2="222.2" stroke="#0cb80c" stroke-width="1"/><rect x="708.82" y="216.3" width="7.1" height="4.9" fill="#fff" stroke="#0cb80c" stroke-width="1.1"/><line x1="723.50" y1="214.7" x2="723.50" y2="245.0" stroke="#0cb80c" stroke-width="1"/><rect x="720.26" y="219.6" width="7.1" height="7.3" fill="#fff" stroke="#0cb80c" stroke-width="1.1"/><line x1="735.50" y1="207.9" x2="735.50" y2="228.4" stroke="#0cb80c" stroke-width="1"/><rect x="731.70" y="222.0" width="7.1" height="5.4" fill="#000" stroke="#0cb80c" stroke-width="1.1"/><line x1="746.50" y1="214.7" x2="746.50" y2="237.2" stroke="#0cb80c" stroke-width="1"/><rect x="743.14" y="221.2" width="7.1" height="5.7" fill="#fff" stroke="#0cb80c" stroke-width="1.1"/><line x1="758.50" y1="225.1" x2="758.50" y2="235.9" stroke="#0cb80c" stroke-width="1"/><rect x="754.58" y="226.5" width="7.1" height="1.9" fill="#000" stroke="#0cb80c" stroke-width="1.1"/><line x1="769.50" y1="218.0" x2="769.50" y2="230.1" stroke="#0cb80c" stroke-width="1"/><rect x="766.02" y="228.8" width="7.1" height="1.3" fill="#fff" stroke="#0cb80c" stroke-width="1.1"/><line x1="780.50" y1="225.2" x2="780.50" y2="243.8" stroke="#0cb80c" stroke-width="1"/><rect x="777.46" y="229.2" width="7.1" height="14.2" fill="#fff" stroke="#0cb80c" stroke-width="1.1"/><line x1="792.50" y1="242.7" x2="792.50" y2="279.7" stroke="#0cb80c" stroke-width="1"/><rect x="788.90" y="244.2" width="7.1" height="34.4" fill="#fff" stroke="#0cb80c" stroke-width="1.1"/><line x1="803.50" y1="271.4" x2="803.50" y2="286.5" stroke="#0cb80c" stroke-width="1"/><rect x="800.34" y="278.6" width="7.1" height="1.4" fill="#fff" stroke="#0cb80c" stroke-width="1.1"/><line x1="815.50" y1="268.1" x2="815.50" y2="287.2" stroke="#0cb80c" stroke-width="1"/><rect x="811.78" y="279.7" width="7.1" height="7.2" fill="#fff" stroke="#0cb80c" stroke-width="1.1"/><line x1="826.50" y1="284.9" x2="826.50" y2="312.8" stroke="#0cb80c" stroke-width="1"/><rect x="823.22" y="286.9" width="7.1" height="10.1" fill="#fff" stroke="#0cb80c" stroke-width="1.1"/><line x1="838.50" y1="260.6" x2="838.50" y2="298.2" stroke="#0cb80c" stroke-width="1"/><rect x="834.66" y="261.8" width="7.1" height="35.9" fill="#000" stroke="#0cb80c" stroke-width="1.1"/><line x1="849.50" y1="248.3" x2="849.50" y2="265.1" stroke="#0cb80c" stroke-width="1"/><rect x="846.10" y="249.4" width="7.1" height="15.1" fill="#000" stroke="#0cb80c" stroke-width="1.1"/><line x1="861.50" y1="248.3" x2="861.50" y2="282.4" stroke="#0cb80c" stroke-width="1"/><rect x="857.54" y="250.5" width="7.1" height="31.5" fill="#fff" stroke="#0cb80c" stroke-width="1.1"/><line x1="872.50" y1="276.4" x2="872.50" y2="293.2" stroke="#0cb80c" stroke-width="1"/><rect x="868.98" y="279.1" width="7.1" height="6.9" fill="#fff" stroke="#0cb80c" stroke-width="1.1"/><line x1="883.50" y1="279.7" x2="883.50" y2="293.9" stroke="#0cb80c" stroke-width="1"/><rect x="880.42" y="282.0" width="7.1" height="4.5" fill="#000" stroke="#0cb80c" stroke-width="1.1"/><line x1="895.50" y1="275.2" x2="895.50" y2="283.1" stroke="#0cb80c" stroke-width="1"/><rect x="891.86" y="279.1" width="7.1" height="3.3" fill="#000" stroke="#0cb80c" stroke-width="1.1"/><line x1="906.50" y1="272.3" x2="906.50" y2="294.3" stroke="#0cb80c" stroke-width="1"/><rect x="903.30" y="279.1" width="7.1" height="10.1" fill="#fff" stroke="#0cb80c" stroke-width="1.1"/><line x1="918.50" y1="283.1" x2="918.50" y2="294.3" stroke="#0cb80c" stroke-width="1"/><rect x="914.74" y="284.2" width="7.1" height="5.6" fill="#000" stroke="#0cb80c" stroke-width="1.1"/><line x1="929.50" y1="281.5" x2="929.50" y2="287.6" stroke="#0cb80c" stroke-width="1"/><rect x="926.18" y="283.6" width="7.1" height="1.8" fill="#fff" stroke="#0cb80c" stroke-width="1.1"/><line x1="941.50" y1="279.7" x2="941.50" y2="297.0" stroke="#0cb80c" stroke-width="1"/><rect x="937.62" y="286.0" width="7.1" height="7.2" fill="#fff" stroke="#0cb80c" stroke-width="1.1"/><line x1="952.50" y1="278.2" x2="952.50" y2="293.9" stroke="#0cb80c" stroke-width="1"/><rect x="949.06" y="292.8" width="7.1" height="1.1" fill="#fff" stroke="#0cb80c" stroke-width="1.1"/><line x1="963.50" y1="283.6" x2="963.50" y2="293.2" stroke="#0cb80c" stroke-width="1"/><rect x="960.50" y="284.2" width="7.1" height="9.0" fill="#000" stroke="#0cb80c" stroke-width="1.1"/><rect x="0" y="79" width="2.3" height="242.2" fill="#000"/><line x1="2.5" y1="78.5" x2="2.5" y2="321.2" stroke="#c0c0c0" stroke-width="0.9"/><path d="M309.8 234.4 L313 237.6 L309.8 240.8 L306.6 237.6z" fill="#3a6ae8" stroke="#a8c0ff" stroke-width="0.5"/><path d="M847.6 262.4 L850.8 265.6 L847.6 268.8 L844.4 265.6z" fill="#e83a3a" stroke="#ffc0c0" stroke-width="0.5"/><path d="M790.5 243.4 L795.5 239.5 L795.5 247.3z" fill="#e82a2a"/><line x1="988.3" y1="102.60" x2="991.3" y2="102.60" stroke="#c0c0c0" stroke-width="1"/><line x1="988.3" y1="129.37" x2="991.3" y2="129.37" stroke="#c0c0c0" stroke-width="1"/><line x1="988.3" y1="156.14" x2="991.3" y2="156.14" stroke="#c0c0c0" stroke-width="1"/><line x1="988.3" y1="182.91" x2="991.3" y2="182.91" stroke="#c0c0c0" stroke-width="1"/><line x1="988.3" y1="209.68" x2="991.3" y2="209.68" stroke="#c0c0c0" stroke-width="1"/><line x1="988.3" y1="236.45" x2="991.3" y2="236.45" stroke="#c0c0c0" stroke-width="1"/><line x1="988.3" y1="263.22" x2="991.3" y2="263.22" stroke="#c0c0c0" stroke-width="1"/><line x1="988.3" y1="289.99" x2="991.3" y2="289.99" stroke="#c0c0c0" stroke-width="1"/><line x1="988.3" y1="316.76" x2="991.3" y2="316.76" stroke="#c0c0c0" stroke-width="1"/><line x1="3.04" y1="321.2" x2="3.04" y2="324.2" stroke="#c0c0c0" stroke-width="1"/><line x1="48.80" y1="321.2" x2="48.80" y2="324.2" stroke="#c0c0c0" stroke-width="1"/><line x1="94.56" y1="321.2" x2="94.56" y2="324.2" stroke="#c0c0c0" stroke-width="1"/><line x1="140.32" y1="321.2" x2="140.32" y2="324.2" stroke="#c0c0c0" stroke-width="1"/><line x1="186.08" y1="321.2" x2="186.08" y2="324.2" stroke="#c0c0c0" stroke-width="1"/><line x1="231.84" y1="321.2" x2="231.84" y2="324.2" stroke="#c0c0c0" stroke-width="1"/><line x1="277.60" y1="321.2" x2="277.60" y2="324.2" stroke="#c0c0c0" stroke-width="1"/><line x1="323.36" y1="321.2" x2="323.36" y2="324.2" stroke="#c0c0c0" stroke-width="1"/><line x1="369.12" y1="321.2" x2="369.12" y2="324.2" stroke="#c0c0c0" stroke-width="1"/><line x1="414.88" y1="321.2" x2="414.88" y2="324.2" stroke="#c0c0c0" stroke-width="1"/><line x1="460.64" y1="321.2" x2="460.64" y2="324.2" stroke="#c0c0c0" stroke-width="1"/><line x1="506.40" y1="321.2" x2="506.40" y2="324.2" stroke="#c0c0c0" stroke-width="1"/><line x1="552.16" y1="321.2" x2="552.16" y2="324.2" stroke="#c0c0c0" stroke-width="1"/><line x1="597.92" y1="321.2" x2="597.92" y2="324.2" stroke="#c0c0c0" stroke-width="1"/><line x1="643.68" y1="321.2" x2="643.68" y2="324.2" stroke="#c0c0c0" stroke-width="1"/><line x1="689.44" y1="321.2" x2="689.44" y2="324.2" stroke="#c0c0c0" stroke-width="1"/><line x1="735.20" y1="321.2" x2="735.20" y2="324.2" stroke="#c0c0c0" stroke-width="1"/><line x1="780.96" y1="321.2" x2="780.96" y2="324.2" stroke="#c0c0c0" stroke-width="1"/><line x1="826.72" y1="321.2" x2="826.72" y2="324.2" stroke="#c0c0c0" stroke-width="1"/><line x1="872.48" y1="321.2" x2="872.48" y2="324.2" stroke="#c0c0c0" stroke-width="1"/><line x1="918.24" y1="321.2" x2="918.24" y2="324.2" stroke="#c0c0c0" stroke-width="1"/><line x1="964.00" y1="321.2" x2="964.00" y2="324.2" stroke="#c0c0c0" stroke-width="1"/><rect x="18.6" y="229.6" width="22.8" height="6.8" fill="#fff"/><rect x="15.6" y="257.5" width="25.1" height="6.3" fill="#fff"/><rect x="990.6" y="280.3" width="27.4" height="7.2" fill="#fff"/>
</svg>
<div class="r" style="left:5px;top:83px;width:0;height:0;border-left:2.6px solid transparent;border-right:2.6px solid transparent;border-top:3.6px solid #fff"></div>
<div class="t" style="left:13px;top:80.80px;font-size:7px;line-height:8.40px;color:#e8e8e8;font-weight:normal;">AUDCAD,M5</div>
<div class="t" style="left:918px;top:81.60px;font-size:7px;line-height:8.40px;color:#e8e8e8;font-weight:normal;">BALANCEA_Ver.S</div>
<svg class="r" style="left:977.5px;top:81.5px" width="9" height="9" viewBox="0 0 9 9"><circle cx="4.5" cy="4.5" r="3.6" fill="none" stroke="#ddd" stroke-width="0.9"/><circle cx="3.2" cy="3.8" r=".55" fill="#ddd"/><circle cx="5.8" cy="3.8" r=".55" fill="#ddd"/><path d="M2.8 6.3 q1.7 -1.4 3.4 0" fill="none" stroke="#ddd" stroke-width="0.7"/></svg>
<div class="t" style="left:8px;top:229.92px;font-size:6.8px;line-height:8.16px;color:#ddd;font-weight:normal;">#</div>
<div class="t" style="left:43px;top:229.92px;font-size:6.8px;line-height:8.16px;color:#ddd;font-weight:normal;">buy 0.15</div>
<div class="t" style="left:8px;top:258.12px;font-size:6.8px;line-height:8.16px;color:#ddd;font-weight:normal;">#6</div>
<div class="t" style="left:43px;top:258.12px;font-size:6.8px;line-height:8.16px;color:#ddd;font-weight:normal;">sell 0.03</div>
<div class="t" style="left:992px;top:98.82px;font-size:6.8px;line-height:8.16px;color:#e8e8e8;font-weight:normal;">0.91385</div>
<div class="t" style="left:992px;top:125.59px;font-size:6.8px;line-height:8.16px;color:#e8e8e8;font-weight:normal;">0.91355</div>
<div class="t" style="left:992px;top:152.36px;font-size:6.8px;line-height:8.16px;color:#e8e8e8;font-weight:normal;">0.91325</div>
<div class="t" style="left:992px;top:179.13px;font-size:6.8px;line-height:8.16px;color:#e8e8e8;font-weight:normal;">0.91295</div>
<div class="t" style="left:992px;top:205.90px;font-size:6.8px;line-height:8.16px;color:#e8e8e8;font-weight:normal;">0.91265</div>
<div class="t" style="left:992px;top:232.67px;font-size:6.8px;line-height:8.16px;color:#e8e8e8;font-weight:normal;">0.91235</div>
<div class="t" style="left:992px;top:259.44px;font-size:6.8px;line-height:8.16px;color:#e8e8e8;font-weight:normal;">0.91205</div>
<div class="t" style="left:992px;top:286.42px;font-size:6.8px;line-height:8.16px;color:#e8e8e8;font-weight:normal;">0.91175</div>
<div class="t" style="left:992px;top:312.98px;font-size:6.8px;line-height:8.16px;color:#e8e8e8;font-weight:normal;">0.91145</div>
<div class="t" style="left:992px;top:280.12px;font-size:6.8px;line-height:8.16px;color:#000;font-weight:normal;">0.91181</div>
<div class="t" style="left:2.74px;top:324.10px;font-size:6.5px;line-height:7.80px;color:#e0e0e0;font-weight:normal;">18 Sep 2025</div>
<div class="t" style="left:48.5px;top:324.10px;font-size:6.5px;line-height:7.80px;color:#e0e0e0;font-weight:normal;">18 Sep 17:00</div>
<div class="t" style="left:94.26px;top:324.10px;font-size:6.5px;line-height:7.80px;color:#e0e0e0;font-weight:normal;">18 Sep 17:20</div>
<div class="t" style="left:140.01999999999998px;top:324.10px;font-size:6.5px;line-height:7.80px;color:#e0e0e0;font-weight:normal;">18 Sep 17:40</div>
<div class="t" style="left:185.77999999999997px;top:324.10px;font-size:6.5px;line-height:7.80px;color:#e0e0e0;font-weight:normal;">18 Sep 18:00</div>
<div class="t" style="left:231.53999999999996px;top:324.10px;font-size:6.5px;line-height:7.80px;color:#e0e0e0;font-weight:normal;">18 Sep 18:20</div>
<div class="t" style="left:277.3px;top:324.10px;font-size:6.5px;line-height:7.80px;color:#e0e0e0;font-weight:normal;">18 Sep 18:40</div>
<div class="t" style="left:323.06px;top:324.10px;font-size:6.5px;line-height:7.80px;color:#e0e0e0;font-weight:normal;">18 Sep 19:00</div>
<div class="t" style="left:368.82px;top:324.10px;font-size:6.5px;line-height:7.80px;color:#e0e0e0;font-weight:normal;">18 Sep 19:20</div>
<div class="t" style="left:414.58px;top:324.10px;font-size:6.5px;line-height:7.80px;color:#e0e0e0;font-weight:normal;">18 Sep 19:40</div>
<div class="t" style="left:460.34px;top:324.10px;font-size:6.5px;line-height:7.80px;color:#e0e0e0;font-weight:normal;">18 Sep 20:00</div>
<div class="t" style="left:506.09999999999997px;top:324.10px;font-size:6.5px;line-height:7.80px;color:#e0e0e0;font-weight:normal;">18 Sep 20:20</div>
<div class="t" style="left:551.86px;top:324.10px;font-size:6.5px;line-height:7.80px;color:#e0e0e0;font-weight:normal;">18 Sep 20:40</div>
<div class="t" style="left:597.62px;top:324.10px;font-size:6.5px;line-height:7.80px;color:#e0e0e0;font-weight:normal;">18 Sep 21:00</div>
<div class="t" style="left:643.38px;top:324.10px;font-size:6.5px;line-height:7.80px;color:#e0e0e0;font-weight:normal;">18 Sep 21:20</div>
<div class="t" style="left:689.14px;top:324.10px;font-size:6.5px;line-height:7.80px;color:#e0e0e0;font-weight:normal;">18 Sep 21:40</div>
<div class="t" style="left:734.9px;top:324.10px;font-size:6.5px;line-height:7.80px;color:#e0e0e0;font-weight:normal;">18 Sep 22:00</div>
<div class="t" style="left:780.66px;top:324.10px;font-size:6.5px;line-height:7.80px;color:#e0e0e0;font-weight:normal;">18 Sep 22:20</div>
<div class="t" style="left:826.42px;top:324.10px;font-size:6.5px;line-height:7.80px;color:#e0e0e0;font-weight:normal;">18 Sep 22:40</div>
<div class="t" style="left:872.18px;top:324.10px;font-size:6.5px;line-height:7.80px;color:#e0e0e0;font-weight:normal;">18 Sep 23:00</div>
<div class="t" style="left:917.9399999999999px;top:324.10px;font-size:6.5px;line-height:7.80px;color:#e0e0e0;font-weight:normal;">18 Sep 23:20</div>
<div class="t" style="left:963.6999999999999px;top:324.10px;font-size:6.5px;line-height:7.80px;color:#e0e0e0;font-weight:normal;">18 Sep 23:40</div>
<div class="r" style="left:1021px;top:76px;width:1.5px;height:260px;background:#c8c8c8;"></div>
<div class="r" style="left:0px;top:77px;width:1.2px;height:259px;background:#3a3a3a;"></div>
<div class="r" style="left:0px;top:335.6px;width:1022px;height:3.4px;background:#eef2ee;"></div>
<div class="r" style="left:0px;top:339px;width:1022px;height:1px;background:#d6d6d6;"></div>
<div class="r" style="left:0px;top:340px;width:10.2px;height:176px;background:#f0f0f0;"></div>
<div class="r" style="left:0px;top:350px;width:9.6px;height:165.7px;background:#c9d9ea;"></div>
<div class="t" style="left:-95.60px;width:200px;text-align:center;top:338.60px;font-size:9px;line-height:10.80px;color:#111;font-weight:bold;">×</div>
<div class="r" style="left:10.5px;top:340.5px;width:1009.5px;height:160.5px;background:#ffffff;"></div>
<div class="r" style="left:1019.5px;top:340px;width:2.5px;height:176px;background:#e6e6e6;"></div>
<div class="r" style="left:10.5px;top:340px;width:1009px;height:0.9px;background:#d0d0d0;"></div>
<div class="r" style="left:10.5px;top:357px;width:1009px;height:0.8px;background:#e2e2e2;"></div>
<div class="r" style="left:10.2px;top:340px;width:0.9px;height:160.5px;background:#c8c8c8;"></div>
<div class="r" style="left:11.3px;top:357.3px;width:1008.3px;height:14.3px;background:#ffffff;"></div>
<div class="r" style="left:11.3px;top:371.6px;width:1008.3px;height:14.3px;background:#ebebeb;"></div>
<div class="r" style="left:11.3px;top:385.90000000000003px;width:1008.3px;height:14.3px;background:#ffffff;"></div>
<div class="r" style="left:11.3px;top:400.20000000000005px;width:1008.3px;height:14.3px;background:#ebebeb;"></div>
<div class="r" style="left:11.3px;top:414.5px;width:1008.3px;height:14.3px;background:#ffffff;"></div>
<div class="r" style="left:109.8px;top:340.5px;width:1px;height:16.5px;background:#dcdcdc;"></div>
<div class="r" style="left:109.8px;top:357.3px;width:1px;height:71.5px;background:#e2e2e2;"></div>
<div class="r" style="left:247.3px;top:340.5px;width:1px;height:16.5px;background:#dcdcdc;"></div>
<div class="r" style="left:247.3px;top:357.3px;width:1px;height:71.5px;background:#e2e2e2;"></div>
<div class="r" style="left:316.1px;top:340.5px;width:1px;height:16.5px;background:#dcdcdc;"></div>
<div class="r" style="left:316.1px;top:357.3px;width:1px;height:71.5px;background:#e2e2e2;"></div>
<div class="r" style="left:369.8px;top:340.5px;width:1px;height:16.5px;background:#dcdcdc;"></div>
<div class="r" style="left:369.8px;top:357.3px;width:1px;height:71.5px;background:#e2e2e2;"></div>
<div class="r" style="left:438.5px;top:340.5px;width:1px;height:16.5px;background:#dcdcdc;"></div>
<div class="r" style="left:438.5px;top:357.3px;width:1px;height:71.5px;background:#e2e2e2;"></div>
<div class="r" style="left:515.1px;top:340.5px;width:1px;height:16.5px;background:#dcdcdc;"></div>
<div class="r" style="left:515.1px;top:357.3px;width:1px;height:71.5px;background:#e2e2e2;"></div>
<div class="r" style="left:591.1px;top:340.5px;width:1px;height:16.5px;background:#dcdcdc;"></div>
<div class="r" style="left:591.1px;top:357.3px;width:1px;height:71.5px;background:#e2e2e2;"></div>
<div class="r" style="left:668.3px;top:340.5px;width:1px;height:16.5px;background:#dcdcdc;"></div>
<div class="r" style="left:668.3px;top:357.3px;width:1px;height:71.5px;background:#e2e2e2;"></div>
<div class="r" style="left:744.1px;top:340.5px;width:1px;height:16.5px;background:#dcdcdc;"></div>
<div class="r" style="left:744.1px;top:357.3px;width:1px;height:71.5px;background:#e2e2e2;"></div>
<div class="r" style="left:820.7px;top:340.5px;width:1px;height:16.5px;background:#dcdcdc;"></div>
<div class="r" style="left:820.7px;top:357.3px;width:1px;height:71.5px;background:#e2e2e2;"></div>
<div class="r" style="left:897.3px;top:340.5px;width:1px;height:16.5px;background:#dcdcdc;"></div>
<div class="r" style="left:897.3px;top:357.3px;width:1px;height:71.5px;background:#e2e2e2;"></div>
<div class="r" style="left:10.5px;top:356.6px;width:1009px;height:1px;background:#dcdcdc;"></div>
<div class="t" id="fit12" style="left:15.6px;top:343.60px;font-size:9px;line-height:10.80px;color:#000;font-weight:normal;;transform-origin:left center;transform:scaleX(0.9278)"><span class="j">注</span><span class="j">文</span><span class="j">番</span><span class="j">号</span></div>
<div class="t" style="left:59px;top:345.00px;font-size:7px;line-height:8.40px;color:#666;font-weight:normal;">/</div>
<div class="t" id="fit13" style="right:779.60px;top:343.60px;font-size:9px;line-height:10.80px;color:#000;font-weight:normal;;transform-origin:right center;transform:scaleX(0.9222)"><span class="j">時</span><span class="j">間</span></div>
<div class="t" id="fit14" style="right:711.00px;top:343.60px;font-size:9px;line-height:10.80px;color:#000;font-weight:normal;;transform-origin:right center;transform:scaleX(0.9333)"><span class="j">取</span><span class="j">引</span><span class="j">種</span><span class="j">別</span></div>
<div class="t" id="fit15" style="right:656.80px;top:343.60px;font-size:9px;line-height:10.80px;color:#000;font-weight:normal;;transform-origin:right center;transform:scaleX(0.9444)"><span class="j">数</span><span class="j">量</span></div>
<div class="t" id="fit16" style="right:587.40px;top:343.60px;font-size:9px;line-height:10.80px;color:#000;font-weight:normal;;transform-origin:right center;transform:scaleX(0.8889)"><span class="j">通</span><span class="j">貨</span><span class="j">ペ</span><span class="j">ア</span></div>
<div class="t" id="fit17" style="right:512.40px;top:343.60px;font-size:9px;line-height:10.80px;color:#000;font-weight:normal;;transform-origin:right center;transform:scaleX(0.9056)"><span class="j">価</span><span class="j">格</span></div>
<div class="t" id="fit18" style="right:435.60px;top:343.60px;font-size:9px;line-height:10.80px;color:#000;font-weight:normal;;transform-origin:right center;transform:scaleX(0.9362)"><span class="j">決</span><span class="j">済</span><span class="j">逆</span><span class="j">指</span><span class="j">値</span>(S/L)</div>
<div class="t" id="fit19" style="right:359.00px;top:343.60px;font-size:9px;line-height:10.80px;color:#000;font-weight:normal;;transform-origin:right center;transform:scaleX(0.9375)"><span class="j">決</span><span class="j">済</span><span class="j">指</span><span class="j">値</span>(T/P)</div>
<div class="t" id="fit20" style="right:282.50px;top:343.60px;font-size:9px;line-height:10.80px;color:#000;font-weight:normal;;transform-origin:right center;transform:scaleX(0.9056)"><span class="j">価</span><span class="j">格</span></div>
<div class="t" id="fit21" style="right:206.00px;top:343.60px;font-size:9px;line-height:10.80px;color:#000;font-weight:normal;;transform-origin:right center;transform:scaleX(0.9259)"><span class="j">手</span><span class="j">数</span><span class="j">料</span></div>
<div class="t" id="fit22" style="right:129.40px;top:343.60px;font-size:9px;line-height:10.80px;color:#000;font-weight:normal;;transform-origin:right center;transform:scaleX(0.6944)"><span class="j">ス</span><span class="j">ワ</span><span class="j">ッ</span><span class="j">プ</span></div>
<div class="t" id="fit23" style="right:9.00px;top:343.60px;font-size:9px;line-height:10.80px;color:#000;font-weight:normal;;transform-origin:right center;transform:scaleX(0.8722)"><span class="j">損</span><span class="j">益</span></div>
<div class="t" style="right:778.20px;top:359.40px;font-size:9px;line-height:10.80px;color:#1a1a1a;font-weight:normal;transform-origin:right center;transform:scaleX(0.867)">2025.09.15 05:05:00</div>
<div class="t" style="right:709.40px;top:359.40px;font-size:9px;line-height:10.80px;color:#1a1a1a;font-weight:normal;transform-origin:right center;transform:scaleX(0.93)">buy</div>
<div class="t" style="right:655.70px;top:359.40px;font-size:9px;line-height:10.80px;color:#1a1a1a;font-weight:normal;transform-origin:right center;transform:scaleX(0.867)">0.03</div>
<div class="t" style="right:587.00px;top:359.40px;font-size:9px;line-height:10.80px;color:#1a1a1a;font-weight:normal;transform-origin:right center;transform:scaleX(0.93)">audcad</div>
<div class="t" style="right:510.40px;top:359.40px;font-size:9px;line-height:10.80px;color:#1a1a1a;font-weight:normal;transform-origin:right center;transform:scaleX(0.867)">0.92166</div>
<div class="t" style="right:434.40px;top:359.40px;font-size:9px;line-height:10.80px;color:#1a1a1a;font-weight:normal;transform-origin:right center;transform:scaleX(0.867)">0.00000</div>
<div class="t" style="right:357.20px;top:359.40px;font-size:9px;line-height:10.80px;color:#1a1a1a;font-weight:normal;transform-origin:right center;transform:scaleX(0.867)">0.00000</div>
<div class="t" style="right:281.40px;top:359.40px;font-size:9px;line-height:10.80px;color:#1a1a1a;font-weight:normal;transform-origin:right center;transform:scaleX(0.867)">0.91181</div>
<div class="t" style="right:204.80px;top:359.40px;font-size:9px;line-height:10.80px;color:#1a1a1a;font-weight:normal;transform-origin:right center;transform:scaleX(0.867)">0</div>
<div class="t" style="right:128.20px;top:359.40px;font-size:9px;line-height:10.80px;color:#1a1a1a;font-weight:normal;transform-origin:right center;transform:scaleX(0.867)">-26</div>
<div class="t" style="right:21.50px;top:359.40px;font-size:9px;line-height:10.80px;color:#1a1a1a;font-weight:normal;transform-origin:right center;transform:scaleX(0.867)">-3 169</div>
<div class="t" style="left:911.80px;width:200px;text-align:center;top:358.30px;font-size:11px;line-height:13.20px;color:#8a8a8a;font-weight:normal;">×</div>
<svg class="r" style="left:13px;top:358.3px" width="13" height="13" viewBox="0 0 13 13"><path d="M1 0.8 h5 l2.3 2.3 v8.7 h-7.3z" fill="#fdfdfd" stroke="#7a7a7a" stroke-width="0.8"/><circle cx="8" cy="9.6" r="2.4" fill="#2f86d8" stroke="#fff" stroke-width="0.5"/></svg>
<div class="t" style="right:778.20px;top:373.70px;font-size:9px;line-height:10.80px;color:#1a1a1a;font-weight:normal;transform-origin:right center;transform:scaleX(0.867)">2025.09.16 00:00:00</div>
<div class="t" style="right:709.40px;top:373.70px;font-size:9px;line-height:10.80px;color:#1a1a1a;font-weight:normal;transform-origin:right center;transform:scaleX(0.93)">buy</div>
<div class="t" style="right:655.70px;top:373.70px;font-size:9px;line-height:10.80px;color:#1a1a1a;font-weight:normal;transform-origin:right center;transform:scaleX(0.867)">0.05</div>
<div class="t" style="right:587.00px;top:373.70px;font-size:9px;line-height:10.80px;color:#1a1a1a;font-weight:normal;transform-origin:right center;transform:scaleX(0.93)">audcad</div>
<div class="t" style="right:510.40px;top:373.70px;font-size:9px;line-height:10.80px;color:#1a1a1a;font-weight:normal;transform-origin:right center;transform:scaleX(0.867)">0.91958</div>
<div class="t" style="right:434.40px;top:373.70px;font-size:9px;line-height:10.80px;color:#1a1a1a;font-weight:normal;transform-origin:right center;transform:scaleX(0.867)">0.00000</div>
<div class="t" style="right:357.20px;top:373.70px;font-size:9px;line-height:10.80px;color:#1a1a1a;font-weight:normal;transform-origin:right center;transform:scaleX(0.867)">0.00000</div>
<div class="t" style="right:281.40px;top:373.70px;font-size:9px;line-height:10.80px;color:#1a1a1a;font-weight:normal;transform-origin:right center;transform:scaleX(0.867)">0.91181</div>
<div class="t" style="right:204.80px;top:373.70px;font-size:9px;line-height:10.80px;color:#1a1a1a;font-weight:normal;transform-origin:right center;transform:scaleX(0.867)">0</div>
<div class="t" style="right:128.20px;top:373.70px;font-size:9px;line-height:10.80px;color:#1a1a1a;font-weight:normal;transform-origin:right center;transform:scaleX(0.867)">-35</div>
<div class="t" style="right:21.50px;top:373.70px;font-size:9px;line-height:10.80px;color:#1a1a1a;font-weight:normal;transform-origin:right center;transform:scaleX(0.867)">-4 167</div>
<div class="t" style="left:911.80px;width:200px;text-align:center;top:372.60px;font-size:11px;line-height:13.20px;color:#8a8a8a;font-weight:normal;">×</div>
<svg class="r" style="left:13px;top:372.6px" width="13" height="13" viewBox="0 0 13 13"><path d="M1 0.8 h5 l2.3 2.3 v8.7 h-7.3z" fill="#fdfdfd" stroke="#7a7a7a" stroke-width="0.8"/><circle cx="8" cy="9.6" r="2.4" fill="#2f86d8" stroke="#fff" stroke-width="0.5"/></svg>
<div class="r" style="left:26px;top:374.6px;width:36px;height:8.5px;background:#ffffff;"></div>
<div class="t" style="right:778.20px;top:388.00px;font-size:9px;line-height:10.80px;color:#1a1a1a;font-weight:normal;transform-origin:right center;transform:scaleX(0.867)">2025.09.17 21:52:33</div>
<div class="t" style="right:709.40px;top:388.00px;font-size:9px;line-height:10.80px;color:#1a1a1a;font-weight:normal;transform-origin:right center;transform:scaleX(0.93)">buy</div>
<div class="t" style="right:655.70px;top:388.00px;font-size:9px;line-height:10.80px;color:#1a1a1a;font-weight:normal;transform-origin:right center;transform:scaleX(0.867)">0.09</div>
<div class="t" style="right:587.00px;top:388.00px;font-size:9px;line-height:10.80px;color:#1a1a1a;font-weight:normal;transform-origin:right center;transform:scaleX(0.93)">audcad</div>
<div class="t" style="right:510.40px;top:388.00px;font-size:9px;line-height:10.80px;color:#1a1a1a;font-weight:normal;transform-origin:right center;transform:scaleX(0.867)">0.91599</div>
<div class="t" style="right:434.40px;top:388.00px;font-size:9px;line-height:10.80px;color:#1a1a1a;font-weight:normal;transform-origin:right center;transform:scaleX(0.867)">0.00000</div>
<div class="t" style="right:357.20px;top:388.00px;font-size:9px;line-height:10.80px;color:#1a1a1a;font-weight:normal;transform-origin:right center;transform:scaleX(0.867)">0.00000</div>
<div class="t" style="right:281.40px;top:388.00px;font-size:9px;line-height:10.80px;color:#1a1a1a;font-weight:normal;transform-origin:right center;transform:scaleX(0.867)">0.91181</div>
<div class="t" style="right:204.80px;top:388.00px;font-size:9px;line-height:10.80px;color:#1a1a1a;font-weight:normal;transform-origin:right center;transform:scaleX(0.867)">0</div>
<div class="t" style="right:128.20px;top:388.00px;font-size:9px;line-height:10.80px;color:#1a1a1a;font-weight:normal;transform-origin:right center;transform:scaleX(0.867)">-47</div>
<div class="t" style="right:21.50px;top:388.00px;font-size:9px;line-height:10.80px;color:#1a1a1a;font-weight:normal;transform-origin:right center;transform:scaleX(0.867)">-4 034</div>
<div class="t" style="left:911.80px;width:200px;text-align:center;top:386.90px;font-size:11px;line-height:13.20px;color:#8a8a8a;font-weight:normal;">×</div>
<svg class="r" style="left:13px;top:386.90000000000003px" width="13" height="13" viewBox="0 0 13 13"><path d="M1 0.8 h5 l2.3 2.3 v8.7 h-7.3z" fill="#fdfdfd" stroke="#7a7a7a" stroke-width="0.8"/><circle cx="8" cy="9.6" r="2.4" fill="#2f86d8" stroke="#fff" stroke-width="0.5"/></svg>
<div class="t" style="right:778.20px;top:402.30px;font-size:9px;line-height:10.80px;color:#1a1a1a;font-weight:normal;transform-origin:right center;transform:scaleX(0.867)">2025.09.18 18:56:44</div>
<div class="t" style="right:709.40px;top:402.30px;font-size:9px;line-height:10.80px;color:#1a1a1a;font-weight:normal;transform-origin:right center;transform:scaleX(0.93)">buy</div>
<div class="t" style="right:655.70px;top:402.30px;font-size:9px;line-height:10.80px;color:#1a1a1a;font-weight:normal;transform-origin:right center;transform:scaleX(0.867)">0.15</div>
<div class="t" style="right:587.00px;top:402.30px;font-size:9px;line-height:10.80px;color:#1a1a1a;font-weight:normal;transform-origin:right center;transform:scaleX(0.93)">audcad</div>
<div class="t" style="right:510.40px;top:402.30px;font-size:9px;line-height:10.80px;color:#1a1a1a;font-weight:normal;transform-origin:right center;transform:scaleX(0.867)">0.91233</div>
<div class="t" style="right:434.40px;top:402.30px;font-size:9px;line-height:10.80px;color:#1a1a1a;font-weight:normal;transform-origin:right center;transform:scaleX(0.867)">0.00000</div>
<div class="t" style="right:357.20px;top:402.30px;font-size:9px;line-height:10.80px;color:#1a1a1a;font-weight:normal;transform-origin:right center;transform:scaleX(0.867)">0.00000</div>
<div class="t" style="right:281.40px;top:402.30px;font-size:9px;line-height:10.80px;color:#1a1a1a;font-weight:normal;transform-origin:right center;transform:scaleX(0.867)">0.91181</div>
<div class="t" style="right:204.80px;top:402.30px;font-size:9px;line-height:10.80px;color:#1a1a1a;font-weight:normal;transform-origin:right center;transform:scaleX(0.867)">0</div>
<div class="t" style="right:128.20px;top:402.30px;font-size:9px;line-height:10.80px;color:#1a1a1a;font-weight:normal;transform-origin:right center;transform:scaleX(0.867)">0</div>
<div class="t" style="right:21.50px;top:402.30px;font-size:9px;line-height:10.80px;color:#1a1a1a;font-weight:normal;transform-origin:right center;transform:scaleX(0.867)">-836</div>
<div class="t" style="left:911.80px;width:200px;text-align:center;top:401.20px;font-size:11px;line-height:13.20px;color:#8a8a8a;font-weight:normal;">×</div>
<svg class="r" style="left:13px;top:401.20000000000005px" width="13" height="13" viewBox="0 0 13 13"><path d="M1 0.8 h5 l2.3 2.3 v8.7 h-7.3z" fill="#fdfdfd" stroke="#7a7a7a" stroke-width="0.8"/><circle cx="8" cy="9.6" r="2.4" fill="#2f86d8" stroke="#fff" stroke-width="0.5"/></svg>
<div class="r" style="left:26px;top:403.20000000000005px;width:36px;height:8.5px;background:#ffffff;"></div>
<div class="t" style="right:778.20px;top:416.60px;font-size:9px;line-height:10.80px;color:#1a1a1a;font-weight:normal;transform-origin:right center;transform:scaleX(0.867)">2025.09.18 22:50:00</div>
<div class="t" style="right:709.40px;top:416.60px;font-size:9px;line-height:10.80px;color:#1a1a1a;font-weight:normal;transform-origin:right center;transform:scaleX(0.93)">sell</div>
<div class="t" style="right:655.70px;top:416.60px;font-size:9px;line-height:10.80px;color:#1a1a1a;font-weight:normal;transform-origin:right center;transform:scaleX(0.867)">0.03</div>
<div class="t" style="right:587.00px;top:416.60px;font-size:9px;line-height:10.80px;color:#1a1a1a;font-weight:normal;transform-origin:right center;transform:scaleX(0.93)">audcad</div>
<div class="t" style="right:510.40px;top:416.60px;font-size:9px;line-height:10.80px;color:#1a1a1a;font-weight:normal;transform-origin:right center;transform:scaleX(0.867)">0.91202</div>
<div class="t" style="right:434.40px;top:416.60px;font-size:9px;line-height:10.80px;color:#1a1a1a;font-weight:normal;transform-origin:right center;transform:scaleX(0.867)">0.00000</div>
<div class="t" style="right:357.20px;top:416.60px;font-size:9px;line-height:10.80px;color:#1a1a1a;font-weight:normal;transform-origin:right center;transform:scaleX(0.867)">0.00000</div>
<div class="t" style="right:281.40px;top:416.60px;font-size:9px;line-height:10.80px;color:#1a1a1a;font-weight:normal;transform-origin:right center;transform:scaleX(0.867)">0.91214</div>
<div class="t" style="right:204.80px;top:416.60px;font-size:9px;line-height:10.80px;color:#1a1a1a;font-weight:normal;transform-origin:right center;transform:scaleX(0.867)">0</div>
<div class="t" style="right:128.20px;top:416.60px;font-size:9px;line-height:10.80px;color:#1a1a1a;font-weight:normal;transform-origin:right center;transform:scaleX(0.867)">0</div>
<div class="t" style="right:21.50px;top:416.60px;font-size:9px;line-height:10.80px;color:#1a1a1a;font-weight:normal;transform-origin:right center;transform:scaleX(0.867)">-39</div>
<div class="t" style="left:911.80px;width:200px;text-align:center;top:415.50px;font-size:11px;line-height:13.20px;color:#8a8a8a;font-weight:normal;">×</div>
<svg class="r" style="left:13px;top:415.5px" width="13" height="13" viewBox="0 0 13 13"><path d="M1 0.8 h5 l2.3 2.3 v8.7 h-7.3z" fill="#fdfdfd" stroke="#7a7a7a" stroke-width="0.8"/><circle cx="8" cy="9.6" r="2.4" fill="#e0502a" stroke="#fff" stroke-width="0.5"/></svg>
<div class="r" style="left:11.3px;top:428.8px;width:1008.3px;height:14.3px;background:#c9c9c9;"></div>
<svg class="r" style="left:12.5px;top:430.5px" width="11" height="11" viewBox="0 0 11 11"><rect x="0.5" y="0.5" width="9.5" height="9.5" fill="#f6f6f6" stroke="#a0a0a0" stroke-width="0.7"/><path d="M5.2 2.5 l2.6 3 l-2.6 3 l-2.6-3z" fill="#d8402a"/></svg>
<div class="t" id="fit24" style="left:27px;top:430.60px;font-size:9px;line-height:10.80px;color:#111;font-weight:bold;;transform-origin:left center;transform:scaleX(0.9235)"><span class="j">残</span><span class="j">高</span>: 1 024 986 JPY &nbsp;<span class="j">有</span><span class="j">効</span><span class="j">証</span><span class="j">拠</span><span class="j">金</span>: 1 012 633 &nbsp;<span class="j">必</span><span class="j">要</span><span class="j">証</span><span class="j">拠</span><span class="j">金</span>: 2 838 &nbsp;<span class="j">余</span><span class="j">剰</span><span class="j">証</span><span class="j">拠</span><span class="j">金</span>: 1 009 795 &nbsp;<span class="j">証</span><span class="j">拠</span><span class="j">金</span><span class="j">維</span><span class="j">持</span><span class="j">率</span>: 35681.22%</div>
<div class="t" id="fit25" style="right:21.80px;top:430.60px;font-size:9px;line-height:10.80px;color:#111;font-weight:bold;;transform-origin:right center;transform:scaleX(0.9433)">-12 353</div>
<div class="t" style="left:-11px;top:496px;width:32px;height:10px;text-align:center;font-size:8px;line-height:10px;color:#222;transform:rotate(-90deg) scaleX(0.78)"><span class="j">タ</span><span class="j">ー</span><span class="j">ミ</span><span class="j">ナ</span><span class="j">ル</span></div>
<div class="r" style="left:10.5px;top:500.5px;width:1009.5px;height:1px;background:#8a8a8a;"></div>
<div class="r" style="left:10.5px;top:501.5px;width:1009.5px;height:15px;background:#f0f0f0;"></div>
<div class="r" style="left:11.5px;top:500.5px;width:33px;height:14px;background:#ffffff;border:1px solid #444;border-top:none;box-sizing:border-box"></div>
<div class="t" id="fit26" style="left:-72.00px;width:200px;text-align:center;top:502.60px;font-size:9px;line-height:10.80px;color:#000;font-weight:normal;;transform-origin:center center;transform:scaleX(0.8889)"><span class="j">取</span><span class="j">引</span></div>
<div class="t" id="fit27" style="left:51px;top:502.90px;font-size:8.5px;line-height:10.20px;color:#555;font-weight:normal;;transform-origin:left center;transform:scaleX(1.0000)"><span class="j">運</span><span class="j">用</span><span class="j">比</span><span class="j">率</span></div>
<div class="t" id="fit28" style="left:100px;top:502.90px;font-size:8.5px;line-height:10.20px;color:#555;font-weight:normal;;transform-origin:left center;transform:scaleX(0.9706)"><span class="j">口</span><span class="j">座</span><span class="j">履</span><span class="j">歴</span></div>
<div class="t" id="fit29" style="left:148px;top:502.90px;font-size:8.5px;line-height:10.20px;color:#555;font-weight:normal;;transform-origin:left center;transform:scaleX(0.7059)"><span class="j">ニ</span><span class="j">ュ</span><span class="j">ー</span><span class="j">ス</span></div>
<div class="t" id="fit30" style="left:186px;top:502.90px;font-size:8.5px;line-height:10.20px;color:#555;font-weight:normal;;transform-origin:left center;transform:scaleX(0.8235)"><span class="j">ア</span><span class="j">ラ</span><span class="j">ー</span><span class="j">ム</span><span class="j">設</span><span class="j">定</span></div>
<div class="t" id="fit31" style="left:242px;top:502.90px;font-size:8.5px;line-height:10.20px;color:#555;font-weight:normal;;transform-origin:left center;transform:scaleX(0.7563)"><span class="j">メ</span><span class="j">ー</span><span class="j">ル</span><span class="j">ボ</span><span class="j">ッ</span><span class="j">ク</span><span class="j">ス</span></div>
<div class="t" id="fit32" style="left:305.8px;top:502.90px;font-size:8.5px;line-height:10.20px;color:#555;font-weight:normal;;transform-origin:left center;transform:scaleX(0.7059)"><span class="j">マ</span><span class="j">ー</span><span class="j">ケ</span><span class="j">ッ</span><span class="j">ト</span></div>
<div class="t" id="fit33" style="left:362px;top:502.90px;font-size:8.5px;line-height:10.20px;color:#555;font-weight:normal;;transform-origin:left center;transform:scaleX(0.9412)"><span class="j">記</span><span class="j">事</span></div>
<div class="t" id="fit34" style="left:398px;top:502.90px;font-size:8.5px;line-height:10.20px;color:#555;font-weight:normal;;transform-origin:left center;transform:scaleX(0.7059)"><span class="j">ラ</span><span class="j">イ</span><span class="j">ブ</span><span class="j">ラ</span><span class="j">リ</span></div>
<div class="t" id="fit35" style="left:442px;top:502.90px;font-size:8.5px;line-height:10.20px;color:#555;font-weight:normal;;transform-origin:left center;transform:scaleX(0.7647)"><span class="j">エ</span><span class="j">キ</span><span class="j">ス</span><span class="j">パ</span><span class="j">ー</span><span class="j">ト</span></div>
<div class="t" id="fit36" style="left:495px;top:502.90px;font-size:8.5px;line-height:10.20px;color:#555;font-weight:normal;;transform-origin:left center;transform:scaleX(1.0000)"><span class="j">操</span><span class="j">作</span><span class="j">履</span><span class="j">歴</span></div>
<div class="r" style="left:92.5px;top:503.5px;width:1px;height:10px;background:#7a7a7a;"></div>
<div class="r" style="left:141px;top:503.5px;width:1px;height:10px;background:#7a7a7a;"></div>
<div class="r" style="left:179px;top:503.5px;width:1px;height:10px;background:#7a7a7a;"></div>
<div class="r" style="left:235.5px;top:503.5px;width:1px;height:10px;background:#7a7a7a;"></div>
<div class="r" style="left:298px;top:503.5px;width:1px;height:10px;background:#7a7a7a;"></div>
<div class="r" style="left:355px;top:503.5px;width:1px;height:10px;background:#7a7a7a;"></div>
<div class="r" style="left:391px;top:503.5px;width:1px;height:10px;background:#7a7a7a;"></div>
<div class="r" style="left:436px;top:503.5px;width:1px;height:10px;background:#7a7a7a;"></div>
<div class="r" style="left:488px;top:503.5px;width:1px;height:10px;background:#7a7a7a;"></div>
<div class="r" style="left:537px;top:503.5px;width:1px;height:10px;background:#7a7a7a;"></div>
<div class="t" style="left:288.5px;top:507.10px;font-size:6.5px;line-height:7.80px;color:#e02020;font-weight:bold;font-style:italic">6</div>
<div class="t" style="left:337.5px;top:507.10px;font-size:6.5px;line-height:7.80px;color:#e02020;font-weight:bold;font-style:italic;letter-spacing:-0.3px">105</div>
<div class="t" style="left:380.5px;top:507.10px;font-size:6.5px;line-height:7.80px;color:#e02020;font-weight:bold;font-style:italic">9</div>
<div class="r" style="left:0px;top:516.5px;width:1022px;height:1.5px;background:#f0f0f0;"></div>
<div class="r" style="left:0px;top:518px;width:1022px;height:0.8px;background:#d6d6d6;"></div>
<div class="r" style="left:0px;top:518.8px;width:1022px;height:16.5px;background:#f0f0f0;"></div>
<div class="t" id="fit37" style="left:1px;top:522.70px;font-size:8px;line-height:9.60px;color:#111;font-weight:normal;;transform-origin:left center;transform:scaleX(0.8823)">F1<span class="j">キ</span><span class="j">ー</span><span class="j">で</span><span class="j">ヘ</span><span class="j">ル</span><span class="j">プ</span><span class="j">が</span><span class="j">表</span><span class="j">示</span><span class="j">さ</span><span class="j">れ</span><span class="j">ま</span><span class="j">す</span></div>
<div class="r" style="left:514.2px;top:521.5px;width:1px;height:13.5px;background:#c4c4c4;"></div>
<div class="r" style="left:597.6px;top:521.5px;width:1px;height:13.5px;background:#c4c4c4;"></div>
<div class="r" style="left:670.9px;top:521.5px;width:1px;height:13.5px;background:#c4c4c4;"></div>
<div class="r" style="left:721px;top:521.5px;width:1px;height:13.5px;background:#c4c4c4;"></div>
<div class="r" style="left:772px;top:521.5px;width:1px;height:13.5px;background:#c4c4c4;"></div>
<div class="r" style="left:819.8px;top:521.5px;width:1px;height:13.5px;background:#c4c4c4;"></div>
<div class="r" style="left:869.3px;top:521.5px;width:1px;height:13.5px;background:#c4c4c4;"></div>
<div class="r" style="left:917.6px;top:521.5px;width:1px;height:13.5px;background:#c4c4c4;"></div>
<div class="t" id="fit38" style="left:518.6px;top:523.00px;font-size:9px;line-height:10.80px;color:#111;font-weight:normal;;transform-origin:left center;transform:scaleX(0.9498)">Default</div>
<div class="t" id="fit39" style="left:601.2px;top:523.00px;font-size:9px;line-height:10.80px;color:#111;font-weight:normal;;transform-origin:left center;transform:scaleX(0.8662)">2025.09.18 19:35</div>
<div class="t" id="fit40" style="left:674.6px;top:523.00px;font-size:9px;line-height:10.80px;color:#111;font-weight:normal;;transform-origin:left center;transform:scaleX(0.8687)">O: 0.91308</div>
<div class="t" id="fit41" style="left:725px;top:523.00px;font-size:9px;line-height:10.80px;color:#111;font-weight:normal;;transform-origin:left center;transform:scaleX(0.8832)">H: 0.91317</div>
<div class="t" id="fit42" style="left:775.4px;top:523.00px;font-size:9px;line-height:10.80px;color:#111;font-weight:normal;;transform-origin:left center;transform:scaleX(0.8767)">L: 0.91302</div>
<div class="t" id="fit43" style="left:824.9px;top:523.00px;font-size:9px;line-height:10.80px;color:#111;font-weight:normal;;transform-origin:left center;transform:scaleX(0.8369)">C: 0.91311</div>
<div class="t" id="fit44" style="left:873.6px;top:523.00px;font-size:9px;line-height:10.80px;color:#111;font-weight:normal;;transform-origin:left center;transform:scaleX(0.8720)">V: 343</div>
<div class="t" id="fit45" style="left:940.4px;top:523.00px;font-size:9px;line-height:10.80px;color:#111;font-weight:normal;;transform-origin:left center;transform:scaleX(0.8961)">69185/74 kb</div>
<svg class="r" style="left:921px;top:522.5px" width="17" height="11" viewBox="0 0 17 11"><rect x="0.3" y="0.5" width="1.4" height="9.5" fill="#2a5d8f"/><rect x="0.3" y="0.5" width="1.4" height="8.5" fill="#8aa63a"/><rect x="2.4" y="0.5" width="1.4" height="9.5" fill="#2a5d8f"/><rect x="2.4" y="0.5" width="1.4" height="7.4" fill="#8aa63a"/><rect x="4.5" y="0.5" width="1.4" height="9.5" fill="#2a5d8f"/><rect x="4.5" y="0.5" width="1.4" height="6.3" fill="#8aa63a"/><rect x="6.6" y="0.5" width="1.4" height="9.5" fill="#2a5d8f"/><rect x="6.6" y="0.5" width="1.4" height="5.2" fill="#8aa63a"/><rect x="8.7" y="0.5" width="1.4" height="9.5" fill="#2a5d8f"/><rect x="8.7" y="0.5" width="1.4" height="4.1" fill="#8aa63a"/><rect x="10.8" y="0.5" width="1.4" height="9.5" fill="#2a5d8f"/><rect x="10.8" y="0.5" width="1.4" height="3.0" fill="#8aa63a"/><rect x="12.9" y="0.5" width="1.4" height="9.5" fill="#2a5d8f"/><rect x="12.9" y="0.5" width="1.4" height="1.9" fill="#8aa63a"/><rect x="15.0" y="0.5" width="1.4" height="9.5" fill="#2a5d8f"/><rect x="15.0" y="0.5" width="1.4" height="0.8" fill="#8aa63a"/></svg>
<svg class="r" style="left:1012px;top:524px" width="10" height="11" viewBox="0 0 10 11"><path d="M9 1 L1 9 M9 4 L4 9 M9 7 L7 9" stroke="#888" stroke-width="0.8"/></svg>
<div class="r" style="left:0px;top:535.3px;width:1024px;height:1.7px;background:#0e2038;"></div>
<div class="r" style="left:1022.4px;top:0px;width:1.6px;height:537px;background:#0e2038;"></div></body></html>
